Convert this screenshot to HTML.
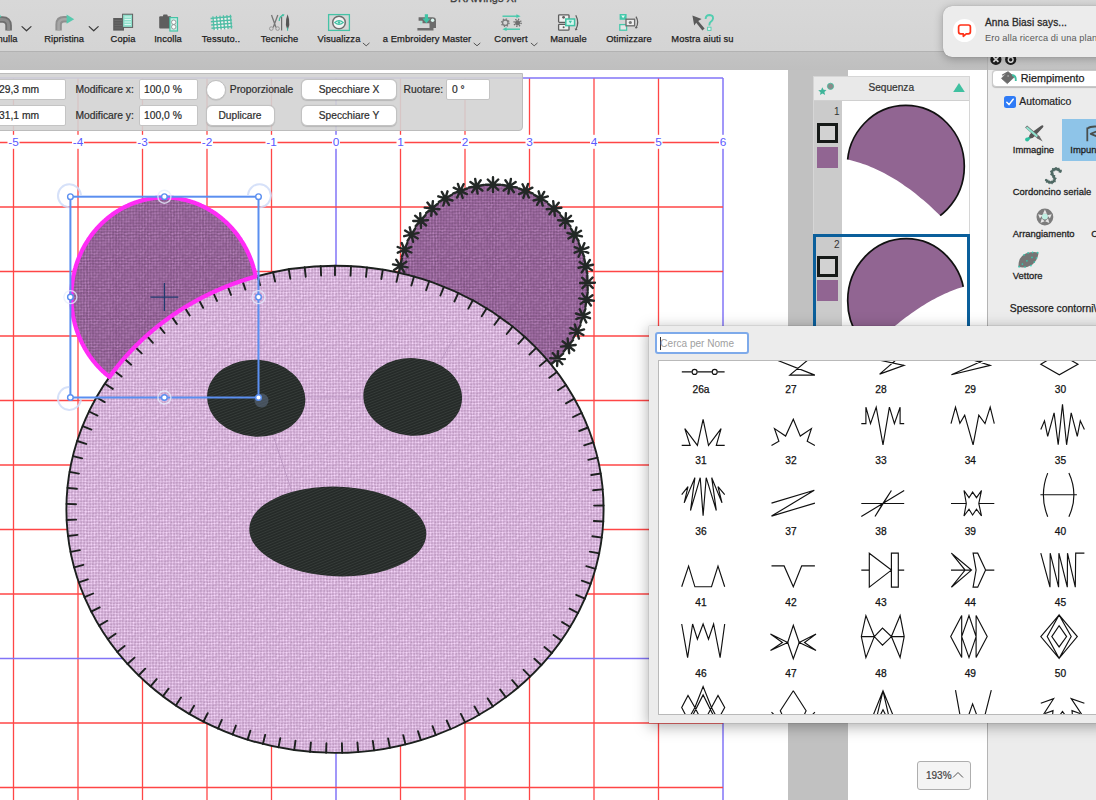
<!DOCTYPE html><html><head><meta charset="utf-8"><title>DRAWings XI</title><style>
*{box-sizing:border-box;margin:0;padding:0}
html,body{width:1096px;height:800px;overflow:hidden;background:#fff;font-family:"Liberation Sans",sans-serif;color:#222}
.abs{position:absolute}
#toolbar{left:0;top:0;width:1096px;height:51px;background:linear-gradient(#d8d8d8,#d4d4d4)}
#band{left:0;top:51px;width:1096px;height:19px;background:linear-gradient(#c3c3c3,#bfbfbf);border-top:1px solid #b2b2b2}
#art{position:absolute;left:0;top:0}
.tl{position:absolute;top:33.8px;font-size:9.35px;color:#1e1e1e;white-space:nowrap;transform:translateX(-50%);letter-spacing:.1px;-webkit-text-stroke:.25px #1e1e1e}
.chev{position:absolute}
#props{left:-4px;top:73px;width:527px;height:58px;background:rgba(211,211,211,.9);border:1px solid #bcbcbc;border-radius:0 0 4px 0}
.fld{position:absolute;background:#fff;border:1px solid #c4c4c4;border-radius:2px;height:21px;font-size:10.3px;line-height:20px;color:#2a2a2a;-webkit-text-stroke:.2px #2a2a2a;white-space:nowrap}
.lbl{position:absolute;font-size:10.3px;color:#2d2d2d;white-space:nowrap;-webkit-text-stroke:.2px #2d2d2d}
.btn{position:absolute;background:#fff;border:1px solid #c2c2c2;border-radius:6px;height:21px;font-size:10.2px;line-height:19px;text-align:center;color:#2d2d2d;-webkit-text-stroke:.2px #2d2d2d;box-shadow:0 .5px 1px rgba(0,0,0,.15)}
#sband{left:788px;top:70px;width:59.5px;height:730px;background:#c1c1c1}
#seq{left:812.5px;top:76px;width:157.5px;height:260px;background:#fff;border:1px solid #d6d6d6}
#rpanel{left:987.3px;top:51px;width:110px;height:749px;background:#ececec;border-left:1px solid #b4b4b4}
#popup{left:648.5px;top:326px;width:460px;height:396.5px;background:#ececec;box-shadow:0 3px 14px rgba(0,0,0,.35),0 0 1px rgba(0,0,0,.4)}
#notif{left:943px;top:5.5px;width:170px;height:51px;background:#ececec;border-radius:9px;box-shadow:0 2px 10px rgba(0,0,0,.28),0 0 1px rgba(0,0,0,.3)}
</style></head><body>
<svg id="art" width="1096" height="800" viewBox="0 0 1096 800">
<defs><pattern id="fh" width="24.00" height="24.00" patternUnits="userSpaceOnUse"><rect width="24.00" height="24.00" fill="rgb(206,169,210)"/><ellipse cx="1.29" cy="1.52" rx="1.02" ry="1.04" fill="rgb(232,201,236)"/><circle cx="-0.21" cy="0.02" r="0.57" fill="rgb(172,137,174)"/><ellipse cx="1.27" cy="4.47" rx="1.00" ry="1.01" fill="rgb(233,202,237)"/><circle cx="-0.23" cy="2.97" r="0.57" fill="rgb(172,137,174)"/><ellipse cx="1.66" cy="7.31" rx="1.01" ry="0.99" fill="rgb(227,196,231)"/><circle cx="0.16" cy="5.81" r="0.57" fill="rgb(172,137,174)"/><ellipse cx="1.54" cy="10.45" rx="1.12" ry="1.10" fill="rgb(230,199,234)"/><circle cx="0.04" cy="8.95" r="0.57" fill="rgb(172,137,174)"/><ellipse cx="1.39" cy="13.32" rx="1.00" ry="1.08" fill="rgb(245,214,249)"/><circle cx="-0.11" cy="11.82" r="0.57" fill="rgb(172,137,174)"/><ellipse cx="1.34" cy="16.54" rx="1.05" ry="1.07" fill="rgb(228,197,232)"/><circle cx="-0.16" cy="15.04" r="0.57" fill="rgb(172,137,174)"/><ellipse cx="1.28" cy="19.28" rx="1.07" ry="1.02" fill="rgb(238,207,242)"/><circle cx="-0.22" cy="17.78" r="0.57" fill="rgb(172,137,174)"/><ellipse cx="1.41" cy="22.54" rx="1.13" ry="0.99" fill="rgb(230,199,234)"/><circle cx="-0.09" cy="21.04" r="0.57" fill="rgb(172,137,174)"/><ellipse cx="4.60" cy="1.37" rx="1.05" ry="1.07" fill="rgb(235,204,239)"/><circle cx="3.10" cy="-0.13" r="0.57" fill="rgb(172,137,174)"/><ellipse cx="4.61" cy="4.39" rx="1.10" ry="1.08" fill="rgb(237,206,241)"/><circle cx="3.11" cy="2.89" r="0.57" fill="rgb(172,137,174)"/><ellipse cx="4.63" cy="7.33" rx="1.01" ry="0.99" fill="rgb(245,214,249)"/><circle cx="3.13" cy="5.83" r="0.57" fill="rgb(172,137,174)"/><ellipse cx="4.63" cy="10.54" rx="1.00" ry="1.04" fill="rgb(235,204,239)"/><circle cx="3.13" cy="9.04" r="0.57" fill="rgb(172,137,174)"/><ellipse cx="4.55" cy="13.54" rx="1.06" ry="1.05" fill="rgb(243,212,247)"/><circle cx="3.05" cy="12.04" r="0.57" fill="rgb(172,137,174)"/><ellipse cx="4.49" cy="16.58" rx="1.17" ry="1.10" fill="rgb(235,204,239)"/><circle cx="2.99" cy="15.08" r="0.57" fill="rgb(172,137,174)"/><ellipse cx="4.75" cy="19.66" rx="1.14" ry="1.04" fill="rgb(227,196,231)"/><circle cx="3.25" cy="18.16" r="0.57" fill="rgb(172,137,174)"/><ellipse cx="4.26" cy="22.48" rx="1.07" ry="1.04" fill="rgb(231,200,235)"/><circle cx="2.76" cy="20.98" r="0.57" fill="rgb(172,137,174)"/><ellipse cx="7.63" cy="1.31" rx="1.01" ry="0.91" fill="rgb(229,198,233)"/><circle cx="6.13" cy="-0.19" r="0.57" fill="rgb(172,137,174)"/><ellipse cx="7.29" cy="4.47" rx="1.07" ry="1.08" fill="rgb(230,199,234)"/><circle cx="5.79" cy="2.97" r="0.57" fill="rgb(172,137,174)"/><ellipse cx="7.68" cy="7.39" rx="1.18" ry="1.07" fill="rgb(236,205,240)"/><circle cx="6.18" cy="5.89" r="0.57" fill="rgb(172,137,174)"/><ellipse cx="7.73" cy="10.33" rx="1.07" ry="1.09" fill="rgb(234,203,238)"/><circle cx="6.23" cy="8.83" r="0.57" fill="rgb(172,137,174)"/><ellipse cx="7.49" cy="13.54" rx="1.04" ry="0.95" fill="rgb(229,198,233)"/><circle cx="5.99" cy="12.04" r="0.57" fill="rgb(172,137,174)"/><ellipse cx="7.43" cy="16.53" rx="0.99" ry="0.99" fill="rgb(231,200,235)"/><circle cx="5.93" cy="15.03" r="0.57" fill="rgb(172,137,174)"/><ellipse cx="7.56" cy="19.59" rx="1.14" ry="1.01" fill="rgb(245,214,249)"/><circle cx="6.06" cy="18.09" r="0.57" fill="rgb(172,137,174)"/><ellipse cx="7.69" cy="22.65" rx="1.18" ry="1.06" fill="rgb(227,196,231)"/><circle cx="6.19" cy="21.15" r="0.57" fill="rgb(172,137,174)"/><ellipse cx="10.57" cy="1.28" rx="1.07" ry="0.92" fill="rgb(233,202,237)"/><circle cx="9.07" cy="-0.22" r="0.57" fill="rgb(172,137,174)"/><ellipse cx="10.42" cy="4.28" rx="1.03" ry="0.93" fill="rgb(227,196,231)"/><circle cx="8.92" cy="2.78" r="0.57" fill="rgb(172,137,174)"/><ellipse cx="10.43" cy="7.26" rx="1.02" ry="0.92" fill="rgb(226,195,230)"/><circle cx="8.93" cy="5.76" r="0.57" fill="rgb(172,137,174)"/><ellipse cx="10.38" cy="10.42" rx="1.12" ry="0.93" fill="rgb(243,212,247)"/><circle cx="8.88" cy="8.92" r="0.57" fill="rgb(172,137,174)"/><ellipse cx="10.75" cy="13.48" rx="1.02" ry="1.08" fill="rgb(233,202,237)"/><circle cx="9.25" cy="11.98" r="0.57" fill="rgb(172,137,174)"/><ellipse cx="10.42" cy="16.38" rx="1.01" ry="0.92" fill="rgb(235,204,239)"/><circle cx="8.92" cy="14.88" r="0.57" fill="rgb(172,137,174)"/><ellipse cx="10.73" cy="19.51" rx="1.02" ry="0.90" fill="rgb(242,211,246)"/><circle cx="9.23" cy="18.01" r="0.57" fill="rgb(172,137,174)"/><ellipse cx="10.51" cy="22.74" rx="1.10" ry="0.91" fill="rgb(228,197,232)"/><circle cx="9.01" cy="21.24" r="0.57" fill="rgb(172,137,174)"/><ellipse cx="13.43" cy="1.33" rx="1.14" ry="0.95" fill="rgb(243,212,247)"/><circle cx="11.93" cy="-0.17" r="0.57" fill="rgb(172,137,174)"/><ellipse cx="13.41" cy="4.36" rx="1.10" ry="1.06" fill="rgb(241,210,245)"/><circle cx="11.91" cy="2.86" r="0.57" fill="rgb(172,137,174)"/><ellipse cx="13.65" cy="7.66" rx="1.20" ry="1.08" fill="rgb(242,211,246)"/><circle cx="12.15" cy="6.16" r="0.57" fill="rgb(172,137,174)"/><ellipse cx="13.43" cy="10.26" rx="1.04" ry="1.01" fill="rgb(240,209,244)"/><circle cx="11.93" cy="8.76" r="0.57" fill="rgb(172,137,174)"/><ellipse cx="13.60" cy="13.73" rx="1.05" ry="0.95" fill="rgb(226,195,230)"/><circle cx="12.10" cy="12.23" r="0.57" fill="rgb(172,137,174)"/><ellipse cx="13.73" cy="16.43" rx="1.19" ry="1.11" fill="rgb(234,203,238)"/><circle cx="12.23" cy="14.93" r="0.57" fill="rgb(172,137,174)"/><ellipse cx="13.35" cy="19.56" rx="1.04" ry="0.94" fill="rgb(230,199,234)"/><circle cx="11.85" cy="18.06" r="0.57" fill="rgb(172,137,174)"/><ellipse cx="13.58" cy="22.65" rx="1.17" ry="1.00" fill="rgb(244,213,248)"/><circle cx="12.08" cy="21.15" r="0.57" fill="rgb(172,137,174)"/><ellipse cx="16.64" cy="1.63" rx="1.13" ry="1.09" fill="rgb(227,196,231)"/><circle cx="15.14" cy="0.13" r="0.57" fill="rgb(172,137,174)"/><ellipse cx="16.42" cy="4.65" rx="1.03" ry="1.07" fill="rgb(235,204,239)"/><circle cx="14.92" cy="3.15" r="0.57" fill="rgb(172,137,174)"/><ellipse cx="16.72" cy="7.61" rx="1.07" ry="0.98" fill="rgb(245,214,249)"/><circle cx="15.22" cy="6.11" r="0.57" fill="rgb(172,137,174)"/><ellipse cx="16.70" cy="10.65" rx="1.02" ry="0.93" fill="rgb(229,198,233)"/><circle cx="15.20" cy="9.15" r="0.57" fill="rgb(172,137,174)"/><ellipse cx="16.58" cy="13.43" rx="1.16" ry="1.11" fill="rgb(228,197,232)"/><circle cx="15.08" cy="11.93" r="0.57" fill="rgb(172,137,174)"/><ellipse cx="16.74" cy="16.57" rx="1.02" ry="0.90" fill="rgb(236,205,240)"/><circle cx="15.24" cy="15.07" r="0.57" fill="rgb(172,137,174)"/><ellipse cx="16.69" cy="19.66" rx="1.19" ry="0.99" fill="rgb(236,205,240)"/><circle cx="15.19" cy="18.16" r="0.57" fill="rgb(172,137,174)"/><ellipse cx="16.37" cy="22.54" rx="1.04" ry="0.96" fill="rgb(230,199,234)"/><circle cx="14.87" cy="21.04" r="0.57" fill="rgb(172,137,174)"/><ellipse cx="19.71" cy="1.43" rx="1.08" ry="0.93" fill="rgb(231,200,235)"/><circle cx="18.21" cy="-0.07" r="0.57" fill="rgb(172,137,174)"/><ellipse cx="19.46" cy="4.71" rx="1.11" ry="1.09" fill="rgb(235,204,239)"/><circle cx="17.96" cy="3.21" r="0.57" fill="rgb(172,137,174)"/><ellipse cx="19.26" cy="7.47" rx="1.10" ry="1.01" fill="rgb(236,205,240)"/><circle cx="17.76" cy="5.97" r="0.57" fill="rgb(172,137,174)"/><ellipse cx="19.34" cy="10.49" rx="0.99" ry="1.07" fill="rgb(229,198,233)"/><circle cx="17.84" cy="8.99" r="0.57" fill="rgb(172,137,174)"/><ellipse cx="19.51" cy="13.53" rx="1.11" ry="0.97" fill="rgb(240,209,244)"/><circle cx="18.01" cy="12.03" r="0.57" fill="rgb(172,137,174)"/><ellipse cx="19.37" cy="16.39" rx="1.01" ry="1.02" fill="rgb(241,210,245)"/><circle cx="17.87" cy="14.89" r="0.57" fill="rgb(172,137,174)"/><ellipse cx="19.63" cy="19.71" rx="1.10" ry="1.02" fill="rgb(241,210,245)"/><circle cx="18.13" cy="18.21" r="0.57" fill="rgb(172,137,174)"/><ellipse cx="19.51" cy="22.60" rx="1.12" ry="1.01" fill="rgb(234,203,238)"/><circle cx="18.01" cy="21.10" r="0.57" fill="rgb(172,137,174)"/><ellipse cx="22.72" cy="1.60" rx="1.10" ry="1.00" fill="rgb(235,204,239)"/><circle cx="21.22" cy="0.10" r="0.57" fill="rgb(172,137,174)"/><ellipse cx="22.53" cy="4.72" rx="1.19" ry="0.95" fill="rgb(243,212,247)"/><circle cx="21.03" cy="3.22" r="0.57" fill="rgb(172,137,174)"/><ellipse cx="22.47" cy="7.29" rx="1.02" ry="0.93" fill="rgb(242,211,246)"/><circle cx="20.97" cy="5.79" r="0.57" fill="rgb(172,137,174)"/><ellipse cx="22.64" cy="10.70" rx="1.01" ry="1.04" fill="rgb(230,199,234)"/><circle cx="21.14" cy="9.20" r="0.57" fill="rgb(172,137,174)"/><ellipse cx="22.32" cy="13.69" rx="1.14" ry="1.04" fill="rgb(229,198,233)"/><circle cx="20.82" cy="12.19" r="0.57" fill="rgb(172,137,174)"/><ellipse cx="22.45" cy="16.49" rx="1.04" ry="1.10" fill="rgb(245,214,249)"/><circle cx="20.95" cy="14.99" r="0.57" fill="rgb(172,137,174)"/><ellipse cx="22.47" cy="19.51" rx="1.16" ry="0.93" fill="rgb(245,214,249)"/><circle cx="20.97" cy="18.01" r="0.57" fill="rgb(172,137,174)"/><ellipse cx="22.61" cy="22.26" rx="1.03" ry="0.97" fill="rgb(232,201,236)"/><circle cx="21.11" cy="20.76" r="0.57" fill="rgb(172,137,174)"/><circle cx="24.00" cy="0.00" r="0.57" fill="rgb(172,137,174)"/><circle cx="0.00" cy="24.00" r="0.57" fill="rgb(172,137,174)"/><circle cx="24.00" cy="3.00" r="0.57" fill="rgb(172,137,174)"/><circle cx="3.00" cy="24.00" r="0.57" fill="rgb(172,137,174)"/><circle cx="24.00" cy="6.00" r="0.57" fill="rgb(172,137,174)"/><circle cx="6.00" cy="24.00" r="0.57" fill="rgb(172,137,174)"/><circle cx="24.00" cy="9.00" r="0.57" fill="rgb(172,137,174)"/><circle cx="9.00" cy="24.00" r="0.57" fill="rgb(172,137,174)"/><circle cx="24.00" cy="12.00" r="0.57" fill="rgb(172,137,174)"/><circle cx="12.00" cy="24.00" r="0.57" fill="rgb(172,137,174)"/><circle cx="24.00" cy="15.00" r="0.57" fill="rgb(172,137,174)"/><circle cx="15.00" cy="24.00" r="0.57" fill="rgb(172,137,174)"/><circle cx="24.00" cy="18.00" r="0.57" fill="rgb(172,137,174)"/><circle cx="18.00" cy="24.00" r="0.57" fill="rgb(172,137,174)"/><circle cx="24.00" cy="21.00" r="0.57" fill="rgb(172,137,174)"/><circle cx="21.00" cy="24.00" r="0.57" fill="rgb(172,137,174)"/><circle cx="24.00" cy="24.00" r="0.57" fill="rgb(172,137,174)"/><circle cx="24.00" cy="24.00" r="0.57" fill="rgb(172,137,174)"/></pattern><pattern id="fe" width="23.20" height="23.20" patternUnits="userSpaceOnUse"><rect width="23.20" height="23.20" fill="rgb(139,93,142)"/><ellipse cx="1.37" cy="1.51" rx="1.05" ry="0.87" fill="rgb(179,126,183)"/><circle cx="-0.08" cy="0.06" r="0.55" fill="rgb(104,64,108)"/><ellipse cx="1.59" cy="4.59" rx="0.97" ry="1.07" fill="rgb(178,125,182)"/><circle cx="0.14" cy="3.14" r="0.55" fill="rgb(104,64,108)"/><ellipse cx="1.59" cy="7.14" rx="1.01" ry="0.88" fill="rgb(168,115,172)"/><circle cx="0.14" cy="5.69" r="0.55" fill="rgb(104,64,108)"/><ellipse cx="1.61" cy="10.03" rx="1.04" ry="1.06" fill="rgb(169,116,173)"/><circle cx="0.16" cy="8.58" r="0.55" fill="rgb(104,64,108)"/><ellipse cx="1.55" cy="12.84" rx="1.14" ry="0.99" fill="rgb(169,116,173)"/><circle cx="0.10" cy="11.39" r="0.55" fill="rgb(104,64,108)"/><ellipse cx="1.24" cy="16.17" rx="1.10" ry="0.96" fill="rgb(167,114,171)"/><circle cx="-0.21" cy="14.72" r="0.55" fill="rgb(104,64,108)"/><ellipse cx="1.63" cy="18.63" rx="1.12" ry="0.89" fill="rgb(181,128,185)"/><circle cx="0.18" cy="17.18" r="0.55" fill="rgb(104,64,108)"/><ellipse cx="1.48" cy="21.96" rx="1.05" ry="0.94" fill="rgb(186,133,190)"/><circle cx="0.03" cy="20.51" r="0.55" fill="rgb(104,64,108)"/><ellipse cx="4.22" cy="1.25" rx="0.98" ry="0.98" fill="rgb(172,119,176)"/><circle cx="2.77" cy="-0.20" r="0.55" fill="rgb(104,64,108)"/><ellipse cx="4.26" cy="4.25" rx="0.97" ry="0.91" fill="rgb(169,116,173)"/><circle cx="2.81" cy="2.80" r="0.55" fill="rgb(104,64,108)"/><ellipse cx="4.19" cy="7.17" rx="1.02" ry="0.97" fill="rgb(184,131,188)"/><circle cx="2.74" cy="5.72" r="0.55" fill="rgb(104,64,108)"/><ellipse cx="4.47" cy="10.18" rx="1.01" ry="0.87" fill="rgb(166,113,170)"/><circle cx="3.02" cy="8.73" r="0.55" fill="rgb(104,64,108)"/><ellipse cx="4.15" cy="13.21" rx="1.05" ry="1.06" fill="rgb(170,117,174)"/><circle cx="2.70" cy="11.76" r="0.55" fill="rgb(104,64,108)"/><ellipse cx="4.30" cy="15.95" rx="1.06" ry="1.04" fill="rgb(176,123,180)"/><circle cx="2.85" cy="14.50" r="0.55" fill="rgb(104,64,108)"/><ellipse cx="4.52" cy="18.95" rx="1.16" ry="0.94" fill="rgb(182,129,186)"/><circle cx="3.07" cy="17.50" r="0.55" fill="rgb(104,64,108)"/><ellipse cx="4.13" cy="21.56" rx="1.04" ry="0.94" fill="rgb(181,128,185)"/><circle cx="2.68" cy="20.11" r="0.55" fill="rgb(104,64,108)"/><ellipse cx="7.08" cy="1.24" rx="1.11" ry="0.92" fill="rgb(167,114,171)"/><circle cx="5.63" cy="-0.21" r="0.55" fill="rgb(104,64,108)"/><ellipse cx="7.14" cy="4.22" rx="1.13" ry="1.01" fill="rgb(186,133,190)"/><circle cx="5.69" cy="2.77" r="0.55" fill="rgb(104,64,108)"/><ellipse cx="7.22" cy="7.13" rx="1.05" ry="0.90" fill="rgb(173,120,177)"/><circle cx="5.77" cy="5.68" r="0.55" fill="rgb(104,64,108)"/><ellipse cx="7.12" cy="10.38" rx="1.15" ry="0.98" fill="rgb(189,136,193)"/><circle cx="5.67" cy="8.93" r="0.55" fill="rgb(104,64,108)"/><ellipse cx="7.19" cy="13.04" rx="1.03" ry="0.87" fill="rgb(173,120,177)"/><circle cx="5.74" cy="11.59" r="0.55" fill="rgb(104,64,108)"/><ellipse cx="7.00" cy="15.83" rx="1.00" ry="0.97" fill="rgb(178,125,182)"/><circle cx="5.55" cy="14.38" r="0.55" fill="rgb(104,64,108)"/><ellipse cx="7.01" cy="18.75" rx="1.04" ry="0.88" fill="rgb(168,115,172)"/><circle cx="5.56" cy="17.30" r="0.55" fill="rgb(104,64,108)"/><ellipse cx="7.38" cy="21.83" rx="1.08" ry="0.98" fill="rgb(171,118,175)"/><circle cx="5.93" cy="20.38" r="0.55" fill="rgb(104,64,108)"/><ellipse cx="10.06" cy="1.69" rx="1.14" ry="0.95" fill="rgb(183,130,187)"/><circle cx="8.61" cy="0.24" r="0.55" fill="rgb(104,64,108)"/><ellipse cx="9.92" cy="4.52" rx="1.10" ry="1.00" fill="rgb(169,116,173)"/><circle cx="8.47" cy="3.07" r="0.55" fill="rgb(104,64,108)"/><ellipse cx="10.31" cy="7.07" rx="1.08" ry="1.02" fill="rgb(187,134,191)"/><circle cx="8.86" cy="5.62" r="0.55" fill="rgb(104,64,108)"/><ellipse cx="10.30" cy="10.31" rx="1.06" ry="1.04" fill="rgb(178,125,182)"/><circle cx="8.85" cy="8.86" r="0.55" fill="rgb(104,64,108)"/><ellipse cx="10.25" cy="12.91" rx="1.14" ry="1.01" fill="rgb(180,127,184)"/><circle cx="8.80" cy="11.46" r="0.55" fill="rgb(104,64,108)"/><ellipse cx="9.95" cy="16.12" rx="0.98" ry="0.94" fill="rgb(166,113,170)"/><circle cx="8.50" cy="14.67" r="0.55" fill="rgb(104,64,108)"/><ellipse cx="10.24" cy="18.84" rx="1.08" ry="1.00" fill="rgb(179,126,183)"/><circle cx="8.79" cy="17.39" r="0.55" fill="rgb(104,64,108)"/><ellipse cx="10.15" cy="21.77" rx="1.12" ry="1.02" fill="rgb(166,113,170)"/><circle cx="8.70" cy="20.32" r="0.55" fill="rgb(104,64,108)"/><ellipse cx="12.93" cy="1.24" rx="0.97" ry="1.02" fill="rgb(181,128,185)"/><circle cx="11.48" cy="-0.21" r="0.55" fill="rgb(104,64,108)"/><ellipse cx="13.17" cy="4.59" rx="1.11" ry="0.91" fill="rgb(172,119,176)"/><circle cx="11.72" cy="3.14" r="0.55" fill="rgb(104,64,108)"/><ellipse cx="13.14" cy="7.38" rx="1.03" ry="0.97" fill="rgb(177,124,181)"/><circle cx="11.69" cy="5.93" r="0.55" fill="rgb(104,64,108)"/><ellipse cx="12.87" cy="10.03" rx="1.09" ry="0.89" fill="rgb(180,127,184)"/><circle cx="11.42" cy="8.58" r="0.55" fill="rgb(104,64,108)"/><ellipse cx="12.81" cy="12.83" rx="1.02" ry="0.99" fill="rgb(183,130,187)"/><circle cx="11.36" cy="11.38" r="0.55" fill="rgb(104,64,108)"/><ellipse cx="13.14" cy="15.85" rx="1.09" ry="1.01" fill="rgb(172,119,176)"/><circle cx="11.69" cy="14.40" r="0.55" fill="rgb(104,64,108)"/><ellipse cx="12.86" cy="19.05" rx="1.05" ry="0.96" fill="rgb(178,125,182)"/><circle cx="11.41" cy="17.60" r="0.55" fill="rgb(104,64,108)"/><ellipse cx="12.81" cy="21.73" rx="1.16" ry="1.06" fill="rgb(170,117,174)"/><circle cx="11.36" cy="20.28" r="0.55" fill="rgb(104,64,108)"/><ellipse cx="15.83" cy="1.30" rx="1.15" ry="0.96" fill="rgb(185,132,189)"/><circle cx="14.38" cy="-0.15" r="0.55" fill="rgb(104,64,108)"/><ellipse cx="15.77" cy="4.36" rx="1.00" ry="0.99" fill="rgb(188,135,192)"/><circle cx="14.32" cy="2.91" r="0.55" fill="rgb(104,64,108)"/><ellipse cx="15.95" cy="7.44" rx="0.98" ry="1.04" fill="rgb(188,135,192)"/><circle cx="14.50" cy="5.99" r="0.55" fill="rgb(104,64,108)"/><ellipse cx="15.94" cy="9.91" rx="1.00" ry="1.05" fill="rgb(182,129,186)"/><circle cx="14.49" cy="8.46" r="0.55" fill="rgb(104,64,108)"/><ellipse cx="15.85" cy="12.87" rx="1.06" ry="0.96" fill="rgb(166,113,170)"/><circle cx="14.40" cy="11.42" r="0.55" fill="rgb(104,64,108)"/><ellipse cx="15.70" cy="16.08" rx="1.02" ry="1.04" fill="rgb(174,121,178)"/><circle cx="14.25" cy="14.63" r="0.55" fill="rgb(104,64,108)"/><ellipse cx="16.06" cy="19.05" rx="0.98" ry="1.06" fill="rgb(186,133,190)"/><circle cx="14.61" cy="17.60" r="0.55" fill="rgb(104,64,108)"/><ellipse cx="16.20" cy="21.79" rx="1.03" ry="0.95" fill="rgb(172,119,176)"/><circle cx="14.75" cy="20.34" r="0.55" fill="rgb(104,64,108)"/><ellipse cx="18.62" cy="1.25" rx="1.04" ry="0.93" fill="rgb(174,121,178)"/><circle cx="17.17" cy="-0.20" r="0.55" fill="rgb(104,64,108)"/><ellipse cx="18.72" cy="4.23" rx="1.01" ry="1.06" fill="rgb(186,133,190)"/><circle cx="17.27" cy="2.78" r="0.55" fill="rgb(104,64,108)"/><ellipse cx="19.08" cy="7.44" rx="1.00" ry="0.95" fill="rgb(178,125,182)"/><circle cx="17.63" cy="5.99" r="0.55" fill="rgb(104,64,108)"/><ellipse cx="19.07" cy="10.17" rx="1.09" ry="1.06" fill="rgb(185,132,189)"/><circle cx="17.62" cy="8.72" r="0.55" fill="rgb(104,64,108)"/><ellipse cx="18.83" cy="13.18" rx="0.97" ry="1.02" fill="rgb(183,130,187)"/><circle cx="17.38" cy="11.73" r="0.55" fill="rgb(104,64,108)"/><ellipse cx="19.06" cy="15.76" rx="1.02" ry="0.88" fill="rgb(181,128,185)"/><circle cx="17.61" cy="14.31" r="0.55" fill="rgb(104,64,108)"/><ellipse cx="18.97" cy="19.09" rx="1.03" ry="0.93" fill="rgb(177,124,181)"/><circle cx="17.52" cy="17.64" r="0.55" fill="rgb(104,64,108)"/><ellipse cx="18.88" cy="21.70" rx="1.09" ry="0.93" fill="rgb(172,119,176)"/><circle cx="17.43" cy="20.25" r="0.55" fill="rgb(104,64,108)"/><ellipse cx="21.95" cy="1.45" rx="0.99" ry="0.91" fill="rgb(170,117,174)"/><circle cx="20.50" cy="-0.00" r="0.55" fill="rgb(104,64,108)"/><ellipse cx="21.72" cy="4.17" rx="1.14" ry="1.07" fill="rgb(171,118,175)"/><circle cx="20.27" cy="2.72" r="0.55" fill="rgb(104,64,108)"/><ellipse cx="21.55" cy="7.12" rx="0.98" ry="0.94" fill="rgb(170,117,174)"/><circle cx="20.10" cy="5.67" r="0.55" fill="rgb(104,64,108)"/><ellipse cx="21.87" cy="10.11" rx="1.07" ry="1.05" fill="rgb(172,119,176)"/><circle cx="20.42" cy="8.66" r="0.55" fill="rgb(104,64,108)"/><ellipse cx="21.67" cy="12.83" rx="1.06" ry="0.95" fill="rgb(175,122,179)"/><circle cx="20.22" cy="11.38" r="0.55" fill="rgb(104,64,108)"/><ellipse cx="21.75" cy="16.01" rx="1.15" ry="0.90" fill="rgb(172,119,176)"/><circle cx="20.30" cy="14.56" r="0.55" fill="rgb(104,64,108)"/><ellipse cx="21.62" cy="18.80" rx="1.00" ry="0.93" fill="rgb(186,133,190)"/><circle cx="20.17" cy="17.35" r="0.55" fill="rgb(104,64,108)"/><ellipse cx="21.94" cy="21.51" rx="1.15" ry="1.04" fill="rgb(176,123,180)"/><circle cx="20.49" cy="20.06" r="0.55" fill="rgb(104,64,108)"/><circle cx="23.20" cy="0.00" r="0.55" fill="rgb(104,64,108)"/><circle cx="0.00" cy="23.20" r="0.55" fill="rgb(104,64,108)"/><circle cx="23.20" cy="2.90" r="0.55" fill="rgb(104,64,108)"/><circle cx="2.90" cy="23.20" r="0.55" fill="rgb(104,64,108)"/><circle cx="23.20" cy="5.80" r="0.55" fill="rgb(104,64,108)"/><circle cx="5.80" cy="23.20" r="0.55" fill="rgb(104,64,108)"/><circle cx="23.20" cy="8.70" r="0.55" fill="rgb(104,64,108)"/><circle cx="8.70" cy="23.20" r="0.55" fill="rgb(104,64,108)"/><circle cx="23.20" cy="11.60" r="0.55" fill="rgb(104,64,108)"/><circle cx="11.60" cy="23.20" r="0.55" fill="rgb(104,64,108)"/><circle cx="23.20" cy="14.50" r="0.55" fill="rgb(104,64,108)"/><circle cx="14.50" cy="23.20" r="0.55" fill="rgb(104,64,108)"/><circle cx="23.20" cy="17.40" r="0.55" fill="rgb(104,64,108)"/><circle cx="17.40" cy="23.20" r="0.55" fill="rgb(104,64,108)"/><circle cx="23.20" cy="20.30" r="0.55" fill="rgb(104,64,108)"/><circle cx="20.30" cy="23.20" r="0.55" fill="rgb(104,64,108)"/><circle cx="23.20" cy="23.20" r="0.55" fill="rgb(104,64,108)"/><circle cx="23.20" cy="23.20" r="0.55" fill="rgb(104,64,108)"/></pattern>

<clipPath id="outhead"><path clip-rule="evenodd" d="M0 0H1096V800H0Z M66.4 509.3 a268.6 243.6 0 1 0 537.2 0 a268.6 243.6 0 1 0 -537.2 0Z"/></clipPath>
<clipPath id="hoop"><rect x="0" y="70" width="723.5" height="730"/></clipPath>
</defs>
<defs><filter id="soft" x="-2%" y="-2%" width="104%" height="104%"><feGaussianBlur stdDeviation="0.85"/></filter>
<pattern id="sat" width="2.6" height="2.6" patternUnits="userSpaceOnUse" patternTransform="rotate(-24)"><rect width="2.6" height="2.6" fill="#252a28"/><rect width="2.6" height=".9" fill="#363c39"/></pattern>
<clipPath id="cph"><ellipse cx="335.0" cy="509.3" rx="268.6" ry="243.6"/></clipPath>
<clipPath id="cpr"><ellipse cx="493.0" cy="285.2" rx="94.5" ry="100.5"/></clipPath>
<clipPath id="cpl"><ellipse cx="164.5" cy="296.8" rx="93.2" ry="99.3"/></clipPath></defs>
<g><line x1="13.50" y1="78" x2="13.50" y2="800" stroke="#ff4646" stroke-width="1.3"/><line x1="78.00" y1="78" x2="78.00" y2="800" stroke="#ff4646" stroke-width="1.3"/><line x1="142.50" y1="78" x2="142.50" y2="800" stroke="#ff4646" stroke-width="1.3"/><line x1="207.00" y1="78" x2="207.00" y2="800" stroke="#ff4646" stroke-width="1.3"/><line x1="271.50" y1="78" x2="271.50" y2="800" stroke="#ff4646" stroke-width="1.3"/><line x1="336.00" y1="78" x2="336.00" y2="800" stroke="#8274f7" stroke-width="1.5"/><line x1="400.50" y1="78" x2="400.50" y2="800" stroke="#ff4646" stroke-width="1.3"/><line x1="465.00" y1="78" x2="465.00" y2="800" stroke="#ff4646" stroke-width="1.3"/><line x1="529.50" y1="78" x2="529.50" y2="800" stroke="#ff4646" stroke-width="1.3"/><line x1="594.00" y1="78" x2="594.00" y2="800" stroke="#ff4646" stroke-width="1.3"/><line x1="658.50" y1="78" x2="658.50" y2="800" stroke="#ff4646" stroke-width="1.3"/><line x1="723" y1="78" x2="723" y2="800" stroke="#8274f7" stroke-width="1.5"/><line x1="0" y1="78" x2="723" y2="78" stroke="#8274f7" stroke-width="1.5"/><line x1="0" y1="142.50" x2="723" y2="142.50" stroke="#ff4646" stroke-width="1.3"/><line x1="0" y1="207.00" x2="723" y2="207.00" stroke="#ff4646" stroke-width="1.3"/><line x1="0" y1="271.50" x2="723" y2="271.50" stroke="#ff4646" stroke-width="1.3"/><line x1="0" y1="336.00" x2="723" y2="336.00" stroke="#ff4646" stroke-width="1.3"/><line x1="0" y1="400.50" x2="723" y2="400.50" stroke="#ff4646" stroke-width="1.3"/><line x1="0" y1="465.00" x2="723" y2="465.00" stroke="#ff4646" stroke-width="1.3"/><line x1="0" y1="529.50" x2="723" y2="529.50" stroke="#ff4646" stroke-width="1.3"/><line x1="0" y1="594.00" x2="723" y2="594.00" stroke="#ff4646" stroke-width="1.3"/><line x1="0" y1="658.50" x2="723" y2="658.50" stroke="#8274f7" stroke-width="1.5"/><line x1="0" y1="723.00" x2="723" y2="723.00" stroke="#ff4646" stroke-width="1.3"/><line x1="0" y1="787.50" x2="723" y2="787.50" stroke="#ff4646" stroke-width="1.3"/></g>
<rect x="7.5" y="134.8" width="12" height="14" fill="#fff"/>
<text x="13.5" y="146.4" font-size="11.8" fill="#5a5aff" text-anchor="middle" font-family="Liberation Sans, sans-serif">-5</text>
<rect x="72.0" y="134.8" width="12" height="14" fill="#fff"/>
<text x="78.0" y="146.4" font-size="11.8" fill="#5a5aff" text-anchor="middle" font-family="Liberation Sans, sans-serif">-4</text>
<rect x="136.5" y="134.8" width="12" height="14" fill="#fff"/>
<text x="142.5" y="146.4" font-size="11.8" fill="#5a5aff" text-anchor="middle" font-family="Liberation Sans, sans-serif">-3</text>
<rect x="201.0" y="134.8" width="12" height="14" fill="#fff"/>
<text x="207.0" y="146.4" font-size="11.8" fill="#5a5aff" text-anchor="middle" font-family="Liberation Sans, sans-serif">-2</text>
<rect x="265.5" y="134.8" width="12" height="14" fill="#fff"/>
<text x="271.5" y="146.4" font-size="11.8" fill="#5a5aff" text-anchor="middle" font-family="Liberation Sans, sans-serif">-1</text>
<rect x="332.0" y="134.8" width="8" height="14" fill="#fff"/>
<text x="336.0" y="146.4" font-size="11.8" fill="#5a5aff" text-anchor="middle" font-family="Liberation Sans, sans-serif">0</text>
<rect x="396.5" y="134.8" width="8" height="14" fill="#fff"/>
<text x="400.5" y="146.4" font-size="11.8" fill="#5a5aff" text-anchor="middle" font-family="Liberation Sans, sans-serif">1</text>
<rect x="461.0" y="134.8" width="8" height="14" fill="#fff"/>
<text x="465.0" y="146.4" font-size="11.8" fill="#5a5aff" text-anchor="middle" font-family="Liberation Sans, sans-serif">2</text>
<rect x="525.5" y="134.8" width="8" height="14" fill="#fff"/>
<text x="529.5" y="146.4" font-size="11.8" fill="#5a5aff" text-anchor="middle" font-family="Liberation Sans, sans-serif">3</text>
<rect x="590.0" y="134.8" width="8" height="14" fill="#fff"/>
<text x="594.0" y="146.4" font-size="11.8" fill="#5a5aff" text-anchor="middle" font-family="Liberation Sans, sans-serif">4</text>
<rect x="654.5" y="134.8" width="8" height="14" fill="#fff"/>
<text x="658.5" y="146.4" font-size="11.8" fill="#5a5aff" text-anchor="middle" font-family="Liberation Sans, sans-serif">5</text>
<rect x="719.0" y="134.8" width="8" height="14" fill="#fff"/>
<text x="723.0" y="146.4" font-size="11.8" fill="#5a5aff" text-anchor="middle" font-family="Liberation Sans, sans-serif">6</text>
<g clip-path="url(#cpr)"><rect x="394.5" y="180.7" width="197.0" height="209.0" fill="url(#fe)"/></g>
<path d="M493.0 192.1L493.0 177.3M487.8 189.9L498.2 179.5M485.6 184.7L500.4 184.7M487.8 179.5L498.2 189.9M508.4 193.6L510.9 179.0M503.6 190.6L515.7 182.0M502.4 185.0L516.9 187.5M505.4 180.2L513.9 192.3M523.3 197.9L528.1 183.9M519.0 194.1L532.4 187.7M518.7 188.5L532.7 193.3M522.5 184.3L528.9 197.6M537.1 204.9L544.2 191.9M533.6 200.5L547.8 196.4M534.2 194.9L547.2 202.0M538.6 191.3L542.7 205.5M549.4 214.3L558.7 202.7M546.7 209.3L561.4 207.7M548.3 203.9L559.8 213.1M553.2 201.1L554.9 215.8M560.0 225.6L571.0 215.8M558.1 220.3L572.9 221.2M560.6 215.2L570.4 226.3M565.9 213.3L565.1 228.1M568.4 238.6L581.0 230.8M567.5 233.0L581.9 236.4M570.8 228.4L578.6 241.0M576.4 227.5L573.0 241.9M574.6 252.7L588.4 247.3M574.7 247.1L588.3 252.9M578.8 243.1L584.2 256.9M584.4 243.2L578.6 256.8M578.5 267.7L593.0 264.7M579.6 262.1L592.0 270.3M584.3 258.9L587.3 273.4M589.9 260.0L581.7 272.4M580.1 283.0L594.9 282.7M582.1 277.7L592.8 287.9M587.3 275.4L587.7 290.2M592.6 277.5L582.4 288.2M579.2 298.4L593.8 300.7M582.2 293.6L590.9 305.5M587.7 292.2L585.4 306.9M592.5 295.2L580.6 303.9M576.0 313.5L590.0 318.2M579.7 309.2L586.3 322.5M585.4 308.9L580.6 322.9M589.6 312.6L576.4 319.1M570.4 327.9L583.4 335.0M574.8 324.4L578.9 338.6M580.5 325.0L573.3 338.0M584.0 329.4L569.8 333.5M562.6 341.2L574.1 350.5M567.6 338.5L569.2 353.2M573.0 340.1L563.7 351.6M575.7 345.0L561.0 346.6M552.7 353.0L562.4 364.2M558.0 351.2L557.1 366.0M563.1 353.7L552.0 363.5M564.9 359.1L550.2 358.1M540.8 363.0L548.6 375.6M546.4 362.1L543.0 376.5M551.0 365.4L538.4 373.2M551.9 371.0L537.5 367.6M477.6 193.6L475.2 179.0M472.1 192.3L480.7 180.2M469.1 187.5L483.7 185.0M470.4 182.0L482.4 190.6M462.7 197.9L457.9 183.9M457.1 197.6L463.6 184.2M453.3 193.3L467.3 188.5M453.7 187.7L467.0 194.1M449.0 204.9L441.8 191.9M443.3 205.5L447.5 191.3M438.9 201.9L451.9 194.8M438.3 196.3L452.5 200.5M436.6 214.2L427.4 202.6M431.2 215.8L432.9 201.1M426.2 213.0L437.8 203.8M424.7 207.6L439.4 209.3M426.1 225.5L415.1 215.7M421.0 228.0L420.2 213.2M415.7 226.1L425.5 215.1M413.2 221.0L428.0 220.2M417.7 238.4L405.1 230.6M413.1 241.8L409.7 227.3M407.5 240.8L415.3 228.3M404.2 236.2L418.6 232.9M411.4 252.5L397.7 247.0M407.5 256.6L401.7 243.0M401.8 256.6L407.3 242.9M397.8 252.7L411.4 246.9M407.5 267.4L393.0 264.4M404.3 272.1L396.2 259.7M398.8 273.1L401.8 258.7M394.1 270.0L406.4 261.8M405.9 282.7L391.1 282.3M403.6 287.9L393.5 277.1M398.3 289.9L398.7 275.1M393.2 287.6L403.9 277.4" stroke="#232826" stroke-width="2.4" stroke-linecap="round" fill="none"/>
<g clip-path="url(#cph)"><rect x="62.4" y="261.7" width="545.2" height="495.2" fill="url(#fh)"/></g>
<ellipse cx="335.0" cy="509.3" rx="268.6" ry="243.6" fill="none" stroke="#1c201e" stroke-width="1.9"/>
<path d="M335.0 265.7L335.0 275.2M351.0 266.1L350.5 275.6M367.0 267.4L366.0 276.9M382.8 269.6L381.3 279.0M398.5 272.6L396.5 281.9M414.0 276.5L411.4 285.6M429.2 281.2L426.1 290.2M444.0 286.7L440.4 295.5M458.4 292.9L454.4 301.5M472.8 300.2L468.3 308.6M486.7 308.3L481.7 316.3M500.0 317.1L494.5 324.8M512.6 326.6L506.7 334.0M524.6 336.8L518.3 343.8M536.2 347.9L529.4 354.6M547.0 359.7L539.8 365.9M556.9 372.1L549.3 377.8M566.0 385.0L558.0 390.2M574.3 398.7L566.0 403.4M581.7 412.9L573.1 417.0M588.0 427.5L579.2 431.0M593.3 442.4L584.2 445.3M597.5 457.7L588.3 459.9M600.7 473.5L591.3 475.0M602.7 489.4L593.2 490.3M603.6 505.5L594.1 505.6M603.3 521.5L593.8 521.0M601.8 537.6L592.4 536.3M599.2 553.4L589.8 551.6M595.5 568.8L586.3 566.2M590.7 583.8L581.8 580.7M584.9 598.6L576.2 594.8M578.0 613.0L569.6 608.6M570.2 627.0L562.1 622.1M561.3 640.5L553.6 635.0M551.8 653.1L544.4 647.1M541.4 665.2L534.4 658.7M530.2 676.6L523.6 669.8M518.3 687.4L512.1 680.1M505.9 697.2L500.2 689.6M492.9 706.4L487.7 698.4M479.3 714.8L474.5 706.5M465.1 722.4L460.9 713.9M450.5 729.2L446.7 720.5M435.8 735.1L432.6 726.2M420.8 740.1L418.0 731.1M405.5 744.4L403.2 735.1M389.9 747.8L388.1 738.4M374.1 750.3L372.8 740.9M358.2 752.0L357.4 742.5M342.2 752.8L341.9 743.3M326.1 752.8L326.4 743.3M310.1 751.9L310.9 742.4M294.2 750.1L295.5 740.7M278.5 747.4L280.3 738.1M262.9 744.0L265.2 734.8M247.6 739.6L250.4 730.6M232.6 734.5L235.9 725.6M218.0 728.6L221.8 719.9M203.4 721.7L207.7 713.2M189.3 713.9L194.1 705.7M175.8 705.5L181.0 697.6M162.8 696.3L168.6 688.7M150.5 686.4L156.7 679.1M138.6 675.5L145.2 668.7M127.5 664.0L134.5 657.6M117.2 651.9L124.6 645.9M107.8 639.2L115.6 633.8M99.0 625.6L107.2 620.8M91.2 611.6L99.7 607.3M84.5 597.2L93.2 593.5M78.8 582.4L87.8 579.3M74.1 567.3L83.3 564.8M70.5 551.9L79.9 550.1M68.0 536.0L77.5 534.9M66.7 520.0L76.1 519.6M66.5 503.9L76.0 504.2M67.4 487.9L76.9 488.8M69.6 471.9L78.9 473.6M72.9 456.2L82.1 458.4M77.2 441.0L86.2 443.9M82.6 426.1L91.4 429.6M89.0 411.5L97.5 415.6M96.4 397.3L104.7 402.1M104.9 383.7L112.8 388.9M114.0 370.8L121.6 376.6M124.1 358.5L131.2 364.7M134.9 346.8L141.7 353.4M146.6 335.7L152.9 342.8M158.6 325.6L164.5 333.0M171.4 316.1L176.8 323.9M184.7 307.4L189.7 315.5M198.6 299.4L203.1 307.8M213.1 292.3L217.0 300.9M227.6 286.0L231.0 294.9M242.4 280.6L245.4 289.6M257.6 276.0L260.1 285.2M273.1 272.3L275.1 281.5M288.8 269.3L290.3 278.7M304.7 267.3L305.7 276.7M320.7 266.0L321.1 275.5" stroke="#1c201e" stroke-width="1.9" stroke-linecap="round" fill="none"/>
<path d="M305 397L363 397M274 438L292 492M440 362L454 338" stroke="#b995c0" stroke-width="1" fill="none" opacity=".8"/>
<ellipse cx="256.2" cy="398.2" rx="49.2" ry="38.5" fill="url(#sat)" transform="rotate(4 256.2 398.2)"/>
<ellipse cx="412.7" cy="396.9" rx="49.4" ry="38.8" fill="url(#sat)" transform="rotate(3 412.7 396.9)"/>
<ellipse cx="337.8" cy="531.5" rx="88.6" ry="44.8" fill="url(#sat)" transform="rotate(2 337.8 531.5)"/>
<g clip-path="url(#outhead)"><g clip-path="url(#cpl)"><rect x="67.3" y="193.5" width="194.4" height="206.6" fill="url(#fe)"/></g></g>
<path d="M109.4 376.9 L109.1 376.6 L108.7 376.4 L108.4 376.1 L108.1 375.8 L107.8 375.6 L107.4 375.3 L107.1 375.0 L106.8 374.8 L106.5 374.5 L106.2 374.2 L105.8 374.0 L105.5 373.7 L105.2 373.4 L104.9 373.1 L104.6 372.9 L104.3 372.6 L104.0 372.3 L103.7 372.0 L103.4 371.7 L103.0 371.5 L102.7 371.2 L102.4 370.9 L102.1 370.6 L101.8 370.3 L101.5 370.0 L101.2 369.7 L100.9 369.4 L100.6 369.1 L100.3 368.8 L100.1 368.5 L99.8 368.2 L99.5 367.9 L99.2 367.6 L98.9 367.3 L98.6 367.0 L98.3 366.7 L98.0 366.4 L97.7 366.1 L97.5 365.8 L97.2 365.5 L96.9 365.2 L96.6 364.8 L96.3 364.5 L96.1 364.2 L95.8 363.9 L95.5 363.6 L95.2 363.2 L95.0 362.9 L94.7 362.6 L94.4 362.3 L94.2 361.9 L93.9 361.6 L93.6 361.3 L93.4 361.0 L93.1 360.6 L92.8 360.3 L92.6 360.0 L92.3 359.6 L92.1 359.3 L91.8 359.0 L91.6 358.6 L91.3 358.3 L91.1 357.9 L90.8 357.6 L90.6 357.3 L90.3 356.9 L90.1 356.6 L89.8 356.2 L89.6 355.9 L89.3 355.5 L89.1 355.2 L88.9 354.8 L88.6 354.5 L88.4 354.1 L88.2 353.8 L87.9 353.4 L87.7 353.0 L87.5 352.7 L87.2 352.3 L87.0 352.0 L86.8 351.6 L86.6 351.2 L86.3 350.9 L86.1 350.5 L85.9 350.2 L85.7 349.8 L85.5 349.4 L85.2 349.1 L85.0 348.7 L84.8 348.3 L84.6 347.9 L84.4 347.6 L84.2 347.2 L84.0 346.8 L83.8 346.4 L83.6 346.1 L83.4 345.7 L83.2 345.3 L83.0 344.9 L82.8 344.6 L82.6 344.2 L82.4 343.8 L82.2 343.4 L82.0 343.0 L81.8 342.7 L81.6 342.3 L81.5 341.9 L81.3 341.5 L81.1 341.1 L80.9 340.7 L80.7 340.3 L80.6 339.9 L80.4 339.5 L80.2 339.2 L80.0 338.8 L79.9 338.4 L79.7 338.0 L79.5 337.6 L79.4 337.2 L79.2 336.8 L79.0 336.4 L78.9 336.0 L78.7 335.6 L78.6 335.2 L78.4 334.8 L78.2 334.4 L78.1 334.0 L77.9 333.6 L77.8 333.2 L77.6 332.8 L77.5 332.4 L77.3 332.0 L77.2 331.6 L77.1 331.2 L76.9 330.8 L76.8 330.4 L76.6 329.9 L76.5 329.5 L76.4 329.1 L76.2 328.7 L76.1 328.3 L76.0 327.9 L75.9 327.5 L75.7 327.1 L75.6 326.7 L75.5 326.2 L75.4 325.8 L75.3 325.4 L75.1 325.0 L75.0 324.6 L74.9 324.2 L74.8 323.8 L74.7 323.3 L74.6 322.9 L74.5 322.5 L74.4 322.1 L74.3 321.7 L74.2 321.2 L74.1 320.8 L74.0 320.4 L73.9 320.0 L73.8 319.6 L73.7 319.1 L73.6 318.7 L73.5 318.3 L73.4 317.9 L73.3 317.4 L73.3 317.0 L73.2 316.6 L73.1 316.2 L73.0 315.7 L72.9 315.3 L72.9 314.9 L72.8 314.5 L72.7 314.0 L72.6 313.6 L72.6 313.2 L72.5 312.8 L72.4 312.3 L72.4 311.9 L72.3 311.5 L72.3 311.0 L72.2 310.6 L72.2 310.2 L72.1 309.8 L72.0 309.3 L72.0 308.9 L71.9 308.5 L71.9 308.0 L71.9 307.6 L71.8 307.2 L71.8 306.7 L71.7 306.3 L71.7 305.9 L71.7 305.5 L71.6 305.0 L71.6 304.6 L71.6 304.2 L71.5 303.7 L71.5 303.3 L71.5 302.9 L71.4 302.4 L71.4 302.0 L71.4 301.6 L71.4 301.1 L71.4 300.7 L71.4 300.3 L71.3 299.8 L71.3 299.4 L71.3 299.0 L71.3 298.5 L71.3 298.1 L71.3 297.7 L71.3 297.2 L71.3 296.8 L71.3 296.4 L71.3 295.9 L71.3 295.5 L71.3 295.1 L71.3 294.6 L71.3 294.2 L71.3 293.8 L71.4 293.3 L71.4 292.9 L71.4 292.5 L71.4 292.0 L71.4 291.6 L71.4 291.2 L71.5 290.7 L71.5 290.3 L71.5 289.9 L71.6 289.4 L71.6 289.0 L71.6 288.6 L71.7 288.1 L71.7 287.7 L71.7 287.3 L71.8 286.9 L71.8 286.4 L71.9 286.0 L71.9 285.6 L71.9 285.1 L72.0 284.7 L72.0 284.3 L72.1 283.8 L72.2 283.4 L72.2 283.0 L72.3 282.6 L72.3 282.1 L72.4 281.7 L72.4 281.3 L72.5 280.8 L72.6 280.4 L72.6 280.0 L72.7 279.6 L72.8 279.1 L72.9 278.7 L72.9 278.3 L73.0 277.9 L73.1 277.4 L73.2 277.0 L73.3 276.6 L73.3 276.2 L73.4 275.7 L73.5 275.3 L73.6 274.9 L73.7 274.5 L73.8 274.0 L73.9 273.6 L74.0 273.2 L74.1 272.8 L74.2 272.4 L74.3 271.9 L74.4 271.5 L74.5 271.1 L74.6 270.7 L74.7 270.3 L74.8 269.8 L74.9 269.4 L75.0 269.0 L75.1 268.6 L75.3 268.2 L75.4 267.8 L75.5 267.4 L75.6 266.9 L75.7 266.5 L75.9 266.1 L76.0 265.7 L76.1 265.3 L76.2 264.9 L76.4 264.5 L76.5 264.1 L76.6 263.7 L76.8 263.2 L76.9 262.8 L77.1 262.4 L77.2 262.0 L77.3 261.6 L77.5 261.2 L77.6 260.8 L77.8 260.4 L77.9 260.0 L78.1 259.6 L78.2 259.2 L78.4 258.8 L78.6 258.4 L78.7 258.0 L78.9 257.6 L79.0 257.2 L79.2 256.8 L79.4 256.4 L79.5 256.0 L79.7 255.6 L79.9 255.2 L80.0 254.8 L80.2 254.4 L80.4 254.1 L80.6 253.7 L80.7 253.3 L80.9 252.9 L81.1 252.5 L81.3 252.1 L81.5 251.7 L81.6 251.3 L81.8 250.9 L82.0 250.6 L82.2 250.2 L82.4 249.8 L82.6 249.4 L82.8 249.0 L83.0 248.7 L83.2 248.3 L83.4 247.9 L83.6 247.5 L83.8 247.2 L84.0 246.8 L84.2 246.4 L84.4 246.0 L84.6 245.7 L84.8 245.3 L85.0 244.9 L85.2 244.5 L85.5 244.2 L85.7 243.8 L85.9 243.4 L86.1 243.1 L86.3 242.7 L86.6 242.4 L86.8 242.0 L87.0 241.6 L87.2 241.3 L87.5 240.9 L87.7 240.6 L87.9 240.2 L88.2 239.8 L88.4 239.5 L88.6 239.1 L88.9 238.8 L89.1 238.4 L89.3 238.1 L89.6 237.7 L89.8 237.4 L90.1 237.0 L90.3 236.7 L90.6 236.3 L90.8 236.0 L91.1 235.7 L91.3 235.3 L91.6 235.0 L91.8 234.6 L92.1 234.3 L92.3 234.0 L92.6 233.6 L92.8 233.3 L93.1 233.0 L93.4 232.6 L93.6 232.3 L93.9 232.0 L94.2 231.7 L94.4 231.3 L94.7 231.0 L95.0 230.7 L95.2 230.4 L95.5 230.0 L95.8 229.7 L96.1 229.4 L96.3 229.1 L96.6 228.8 L96.9 228.4 L97.2 228.1 L97.5 227.8 L97.7 227.5 L98.0 227.2 L98.3 226.9 L98.6 226.6 L98.9 226.3 L99.2 226.0 L99.5 225.7 L99.8 225.4 L100.1 225.1 L100.3 224.8 L100.6 224.5 L100.9 224.2 L101.2 223.9 L101.5 223.6 L101.8 223.3 L102.1 223.0 L102.4 222.7 L102.7 222.4 L103.0 222.1 L103.4 221.9 L103.7 221.6 L104.0 221.3 L104.3 221.0 L104.6 220.7 L104.9 220.5 L105.2 220.2 L105.5 219.9 L105.8 219.6 L106.2 219.4 L106.5 219.1 L106.8 218.8 L107.1 218.6 L107.4 218.3 L107.8 218.0 L108.1 217.8 L108.4 217.5 L108.7 217.2 L109.1 217.0 L109.4 216.7 L109.7 216.5 L110.0 216.2 L110.4 216.0 L110.7 215.7 L111.0 215.5 L111.4 215.2 L111.7 215.0 L112.0 214.7 L112.4 214.5 L112.7 214.2 L113.1 214.0 L113.4 213.8 L113.7 213.5 L114.1 213.3 L114.4 213.1 L114.8 212.8 L115.1 212.6 L115.5 212.4 L115.8 212.1 L116.2 211.9 L116.5 211.7 L116.8 211.5 L117.2 211.2 L117.5 211.0 L117.9 210.8 L118.3 210.6 L118.6 210.4 L119.0 210.2 L119.3 210.0 L119.7 209.7 L120.0 209.5 L120.4 209.3 L120.7 209.1 L121.1 208.9 L121.5 208.7 L121.8 208.5 L122.2 208.3 L122.6 208.1 L122.9 207.9 L123.3 207.7 L123.6 207.5 L124.0 207.4 L124.4 207.2 L124.7 207.0 L125.1 206.8 L125.5 206.6 L125.9 206.4 L126.2 206.3 L126.6 206.1 L127.0 205.9 L127.3 205.7 L127.7 205.6 L128.1 205.4 L128.5 205.2 L128.8 205.1 L129.2 204.9 L129.6 204.7 L130.0 204.6 L130.3 204.4 L130.7 204.3 L131.1 204.1 L131.5 203.9 L131.9 203.8 L132.2 203.6 L132.6 203.5 L133.0 203.3 L133.4 203.2 L133.8 203.1 L134.2 202.9 L134.5 202.8 L134.9 202.6 L135.3 202.5 L135.7 202.4 L136.1 202.2 L136.5 202.1 L136.9 202.0 L137.3 201.8 L137.6 201.7 L138.0 201.6 L138.4 201.5 L138.8 201.3 L139.2 201.2 L139.6 201.1 L140.0 201.0 L140.4 200.9 L140.8 200.8 L141.2 200.7 L141.6 200.6 L142.0 200.4 L142.3 200.3 L142.7 200.2 L143.1 200.1 L143.5 200.0 L143.9 199.9 L144.3 199.9 L144.7 199.8 L145.1 199.7 L145.5 199.6 L145.9 199.5 L146.3 199.4 L146.7 199.3 L147.1 199.2 L147.5 199.2 L147.9 199.1 L148.3 199.0 L148.7 198.9 L149.1 198.9 L149.5 198.8 L149.9 198.7 L150.3 198.7 L150.7 198.6 L151.1 198.5 L151.5 198.5 L151.9 198.4 L152.3 198.3 L152.7 198.3 L153.1 198.2 L153.5 198.2 L153.9 198.1 L154.4 198.1 L154.8 198.0 L155.2 198.0 L155.6 198.0 L156.0 197.9 L156.4 197.9 L156.8 197.8 L157.2 197.8 L157.6 197.8 L158.0 197.7 L158.4 197.7 L158.8 197.7 L159.2 197.7 L159.6 197.6 L160.0 197.6 L160.4 197.6 L160.8 197.6 L161.2 197.6 L161.7 197.5 L162.1 197.5 L162.5 197.5 L162.9 197.5 L163.3 197.5 L163.7 197.5 L164.1 197.5 L164.5 197.5 L164.9 197.5 L165.3 197.5 L165.7 197.5 L166.1 197.5 L166.5 197.5 L166.9 197.5 L167.3 197.5 L167.8 197.6 L168.2 197.6 L168.6 197.6 L169.0 197.6 L169.4 197.6 L169.8 197.7 L170.2 197.7 L170.6 197.7 L171.0 197.7 L171.4 197.8 L171.8 197.8 L172.2 197.8 L172.6 197.9 L173.0 197.9 L173.4 198.0 L173.8 198.0 L174.2 198.0 L174.6 198.1 L175.1 198.1 L175.5 198.2 L175.9 198.2 L176.3 198.3 L176.7 198.3 L177.1 198.4 L177.5 198.5 L177.9 198.5 L178.3 198.6 L178.7 198.7 L179.1 198.7 L179.5 198.8 L179.9 198.9 L180.3 198.9 L180.7 199.0 L181.1 199.1 L181.5 199.2 L181.9 199.2 L182.3 199.3 L182.7 199.4 L183.1 199.5 L183.5 199.6 L183.9 199.7 L184.3 199.8 L184.7 199.9 L185.1 199.9 L185.5 200.0 L185.9 200.1 L186.3 200.2 L186.7 200.3 L187.0 200.4 L187.4 200.6 L187.8 200.7 L188.2 200.8 L188.6 200.9 L189.0 201.0 L189.4 201.1 L189.8 201.2 L190.2 201.3 L190.6 201.5 L191.0 201.6 L191.4 201.7 L191.7 201.8 L192.1 202.0 L192.5 202.1 L192.9 202.2 L193.3 202.4 L193.7 202.5 L194.1 202.6 L194.5 202.8 L194.8 202.9 L195.2 203.1 L195.6 203.2 L196.0 203.3 L196.4 203.5 L196.8 203.6 L197.1 203.8 L197.5 203.9 L197.9 204.1 L198.3 204.3 L198.7 204.4 L199.0 204.6 L199.4 204.7 L199.8 204.9 L200.2 205.1 L200.5 205.2 L200.9 205.4 L201.3 205.6 L201.7 205.7 L202.0 205.9 L202.4 206.1 L202.8 206.3 L203.1 206.4 L203.5 206.6 L203.9 206.8 L204.3 207.0 L204.6 207.2 L205.0 207.4 L205.4 207.5 L205.7 207.7 L206.1 207.9 L206.4 208.1 L206.8 208.3 L207.2 208.5 L207.5 208.7 L207.9 208.9 L208.3 209.1 L208.6 209.3 L209.0 209.5 L209.3 209.7 L209.7 210.0 L210.0 210.2 L210.4 210.4 L210.7 210.6 L211.1 210.8 L211.5 211.0 L211.8 211.2 L212.2 211.5 L212.5 211.7 L212.8 211.9 L213.2 212.1 L213.5 212.4 L213.9 212.6 L214.2 212.8 L214.6 213.1 L214.9 213.3 L215.3 213.5 L215.6 213.8 L215.9 214.0 L216.3 214.2 L216.6 214.5 L217.0 214.7 L217.3 215.0 L217.6 215.2 L218.0 215.5 L218.3 215.7 L218.6 216.0 L219.0 216.2 L219.3 216.5 L219.6 216.7 L219.9 217.0 L220.3 217.2 L220.6 217.5 L220.9 217.8 L221.2 218.0 L221.6 218.3 L221.9 218.6 L222.2 218.8 L222.5 219.1 L222.8 219.4 L223.2 219.6 L223.5 219.9 L223.8 220.2 L224.1 220.5 L224.4 220.7 L224.7 221.0 L225.0 221.3 L225.3 221.6 L225.6 221.9 L226.0 222.1 L226.3 222.4 L226.6 222.7 L226.9 223.0 L227.2 223.3 L227.5 223.6 L227.8 223.9 L228.1 224.2 L228.4 224.5 L228.7 224.8 L228.9 225.1 L229.2 225.4 L229.5 225.7 L229.8 226.0 L230.1 226.3 L230.4 226.6 L230.7 226.9 L231.0 227.2 L231.3 227.5 L231.5 227.8 L231.8 228.1 L232.1 228.4 L232.4 228.8 L232.7 229.1 L232.9 229.4 L233.2 229.7 L233.5 230.0 L233.8 230.4 L234.0 230.7 L234.3 231.0 L234.6 231.3 L234.8 231.7 L235.1 232.0 L235.4 232.3 L235.6 232.6 L235.9 233.0 L236.2 233.3 L236.4 233.6 L236.7 234.0 L236.9 234.3 L237.2 234.6 L237.4 235.0 L237.7 235.3 L237.9 235.7 L238.2 236.0 L238.4 236.3 L238.7 236.7 L238.9 237.0 L239.2 237.4 L239.4 237.7 L239.7 238.1 L239.9 238.4 L240.1 238.8 L240.4 239.1 L240.6 239.5 L240.8 239.8 L241.1 240.2 L241.3 240.6 L241.5 240.9 L241.8 241.3 L242.0 241.6 L242.2 242.0 L242.4 242.4 L242.7 242.7 L242.9 243.1 L243.1 243.4 L243.3 243.8 L243.5 244.2 L243.8 244.5 L244.0 244.9 L244.2 245.3 L244.4 245.7 L244.6 246.0 L244.8 246.4 L245.0 246.8 L245.2 247.1 L245.4 247.5 L245.6 247.9 L245.8 248.3 L246.0 248.7 L246.2 249.0 L246.4 249.4 L246.6 249.8 L246.8 250.2 L247.0 250.6 L247.2 250.9 L247.4 251.3 L247.5 251.7 L247.7 252.1 L247.9 252.5 L248.1 252.9 L248.3 253.3 L248.4 253.7 L248.6 254.1 L248.8 254.4 L249.0 254.8 L249.1 255.2 L249.3 255.6 L249.5 256.0 L249.6 256.4 L249.8 256.8 L250.0 257.2 L250.1 257.6 L250.3 258.0 L250.4 258.4 L250.6 258.8 L250.8 259.2 L250.9 259.6 L251.1 260.0 L251.2 260.4 L251.4 260.8 L251.5 261.2 L251.7 261.6 L251.8 262.0 L251.9 262.4 L252.1 262.8 L252.2 263.2 L252.4 263.7 L252.5 264.1 L252.6 264.5 L252.8 264.9 L252.9 265.3 L253.0 265.7 L253.1 266.1 L253.3 266.5 L253.4 266.9 L253.5 267.4 L253.6 267.8 L253.7 268.2 L253.9 268.6 L254.0 269.0 L254.1 269.4 L254.2 269.8 L254.3 270.3 L254.4 270.7 L254.5 271.1 L254.6 271.5 L254.7 271.9 L254.8 272.4 L254.9 272.8 L255.0 273.2 L255.1 273.6 L255.2 274.0 L255.3 274.5 L255.4 274.9 L255.5 275.3 L255.6 275.7 L255.7 276.2 L255.3 276.7 L254.8 276.8 L254.2 277.0 L253.7 277.1 L253.1 277.3 L252.6 277.5 L252.0 277.6 L251.4 277.8 L250.9 278.0 L250.3 278.1 L249.8 278.3 L249.2 278.5 L248.7 278.6 L248.1 278.8 L247.6 279.0 L247.0 279.1 L246.4 279.3 L245.9 279.5 L245.3 279.7 L244.8 279.9 L244.2 280.0 L243.7 280.2 L243.1 280.4 L242.6 280.6 L242.0 280.8 L241.5 280.9 L240.9 281.1 L240.4 281.3 L239.8 281.5 L239.3 281.7 L238.7 281.9 L238.2 282.1 L237.6 282.3 L237.1 282.5 L236.6 282.7 L236.0 282.8 L235.5 283.0 L234.9 283.2 L234.4 283.4 L233.8 283.6 L233.3 283.8 L232.8 284.0 L232.2 284.2 L231.7 284.4 L231.1 284.7 L230.6 284.9 L230.0 285.1 L229.5 285.3 L229.0 285.5 L228.4 285.7 L227.9 285.9 L227.4 286.1 L226.8 286.3 L226.3 286.5 L225.8 286.8 L225.2 287.0 L224.7 287.2 L224.1 287.4 L223.6 287.6 L223.1 287.9 L222.5 288.1 L222.0 288.3 L221.5 288.5 L221.0 288.7 L220.4 289.0 L219.9 289.2 L219.4 289.4 L218.8 289.7 L218.3 289.9 L217.8 290.1 L217.3 290.4 L216.7 290.6 L216.2 290.8 L215.7 291.1 L215.2 291.3 L214.6 291.5 L214.1 291.8 L213.6 292.0 L213.1 292.3 L212.5 292.5 L212.0 292.7 L211.5 293.0 L211.0 293.2 L210.5 293.5 L209.9 293.7 L209.4 294.0 L208.9 294.2 L208.4 294.5 L207.9 294.7 L207.4 295.0 L206.8 295.2 L206.3 295.5 L205.8 295.7 L205.3 296.0 L204.8 296.2 L204.3 296.5 L203.8 296.8 L203.2 297.0 L202.7 297.3 L202.2 297.5 L201.7 297.8 L201.2 298.1 L200.7 298.3 L200.2 298.6 L199.7 298.9 L199.2 299.1 L198.7 299.4 L198.2 299.7 L197.7 299.9 L197.2 300.2 L196.7 300.5 L196.2 300.8 L195.7 301.0 L195.2 301.3 L194.7 301.6 L194.2 301.9 L193.7 302.2 L193.2 302.4 L192.7 302.7 L192.2 303.0 L191.7 303.3 L191.2 303.6 L190.7 303.8 L190.2 304.1 L189.7 304.4 L189.2 304.7 L188.7 305.0 L188.2 305.3 L187.7 305.6 L187.2 305.9 L186.7 306.2 L186.3 306.5 L185.8 306.8 L185.3 307.0 L184.8 307.3 L184.3 307.6 L183.8 307.9 L183.3 308.2 L182.9 308.5 L182.4 308.8 L181.9 309.1 L181.4 309.5 L180.9 309.8 L180.5 310.1 L180.0 310.4 L179.5 310.7 L179.0 311.0 L178.5 311.3 L178.1 311.6 L177.6 311.9 L177.1 312.2 L176.6 312.5 L176.2 312.9 L175.7 313.2 L175.2 313.5 L174.8 313.8 L174.3 314.1 L173.8 314.4 L173.4 314.8 L172.9 315.1 L172.4 315.4 L172.0 315.7 L171.5 316.0 L171.0 316.4 L170.6 316.7 L170.1 317.0 L169.6 317.3 L169.2 317.7 L168.7 318.0 L168.3 318.3 L167.8 318.7 L167.3 319.0 L166.9 319.3 L166.4 319.7 L166.0 320.0 L165.5 320.3 L165.1 320.7 L164.6 321.0 L164.1 321.3 L163.7 321.7 L163.2 322.0 L162.8 322.4 L162.3 322.7 L161.9 323.0 L161.5 323.4 L161.0 323.7 L160.6 324.1 L160.1 324.4 L159.7 324.8 L159.2 325.1 L158.8 325.5 L158.3 325.8 L157.9 326.2 L157.5 326.5 L157.0 326.9 L156.6 327.2 L156.1 327.6 L155.7 327.9 L155.3 328.3 L154.8 328.6 L154.4 329.0 L154.0 329.3 L153.5 329.7 L153.1 330.1 L152.7 330.4 L152.2 330.8 L151.8 331.1 L151.4 331.5 L151.0 331.9 L150.5 332.2 L150.1 332.6 L149.7 333.0 L149.3 333.3 L148.8 333.7 L148.4 334.1 L148.0 334.4 L147.6 334.8 L147.2 335.2 L146.7 335.6 L146.3 335.9 L145.9 336.3 L145.5 336.7 L145.1 337.0 L144.7 337.4 L144.2 337.8 L143.8 338.2 L143.4 338.6 L143.0 338.9 L142.6 339.3 L142.2 339.7 L141.8 340.1 L141.4 340.5 L141.0 340.8 L140.6 341.2 L140.2 341.6 L139.8 342.0 L139.4 342.4 L139.0 342.8 L138.6 343.2 L138.2 343.6 L137.8 343.9 L137.4 344.3 L137.0 344.7 L136.6 345.1 L136.2 345.5 L135.8 345.9 L135.4 346.3 L135.0 346.7 L134.6 347.1 L134.2 347.5 L133.8 347.9 L133.4 348.3 L133.1 348.7 L132.7 349.1 L132.3 349.5 L131.9 349.9 L131.5 350.3 L131.1 350.7 L130.8 351.1 L130.4 351.5 L130.0 351.9 L129.6 352.3 L129.2 352.7 L128.9 353.1 L128.5 353.5 L128.1 353.9 L127.7 354.4 L127.4 354.8 L127.0 355.2 L126.6 355.6 L126.3 356.0 L125.9 356.4 L125.5 356.8 L125.2 357.2 L124.8 357.7 L124.4 358.1 L124.1 358.5 L123.7 358.9 L123.3 359.3 L123.0 359.7 L122.6 360.2 L122.3 360.6 L121.9 361.0 L121.5 361.4 L121.2 361.9 L120.8 362.3 L120.5 362.7 L120.1 363.1 L119.8 363.5 L119.4 364.0 L119.1 364.4 L118.7 364.8 L118.4 365.3 L118.0 365.7 L117.7 366.1 L117.4 366.5 L117.0 367.0 L116.7 367.4 L116.3 367.8 L116.0 368.3 L115.7 368.7 L115.3 369.1 L115.0 369.6 L114.6 370.0 L114.3 370.4 L114.0 370.9 L113.6 371.3 L113.3 371.8 L113.0 372.2 L112.6 372.6 L112.3 373.1 L112.0 373.5 L111.7 374.0 L111.3 374.4 L111.0 374.8 L110.7 375.3 L110.4 375.7 L110.1 376.2 L109.7 376.6 Z" fill="none" stroke="#ff2cf5" stroke-width="4.2" stroke-linejoin="round"/>
<rect x="70.4" y="196.7" width="188.1" height="200.8" fill="none" stroke="#5b8ff0" stroke-width="2"/>
<path d="M68.4 207.2A11.5 11.5 0 1 1 80.9 194.7" fill="none" stroke="#cfdcf8" stroke-width="2" stroke-linecap="round" opacity=".85"/>
<path d="M248.0 194.7A11.5 11.5 0 1 1 260.5 207.2" fill="none" stroke="#cfdcf8" stroke-width="2" stroke-linecap="round" opacity=".85"/>
<path d="M80.9 399.5A11.5 11.5 0 1 1 68.4 387.0" fill="none" stroke="#cfdcf8" stroke-width="2" stroke-linecap="round" opacity=".85"/>
<circle cx="164.4" cy="196.7" r="6.5" fill="none" stroke="#e6edfc" stroke-width="1.4" opacity=".8"/>
<circle cx="164.4" cy="397.5" r="6.5" fill="none" stroke="#e6edfc" stroke-width="1.4" opacity=".8"/>
<circle cx="70.4" cy="297.1" r="6.5" fill="none" stroke="#e6edfc" stroke-width="1.4" opacity=".8"/>
<circle cx="258.5" cy="297.1" r="6.5" fill="none" stroke="#e6edfc" stroke-width="1.4" opacity=".8"/>
<circle cx="261.5" cy="400.5" r="7" fill="#5f6f86" opacity=".55"/>
<circle cx="70.4" cy="196.7" r="2.8" fill="#fff" stroke="#5b8ff0" stroke-width="1.4"/>
<circle cx="164.4" cy="196.7" r="2.8" fill="#fff" stroke="#5b8ff0" stroke-width="1.4"/>
<circle cx="258.5" cy="196.7" r="2.8" fill="#fff" stroke="#5b8ff0" stroke-width="1.4"/>
<circle cx="70.4" cy="297.1" r="2.8" fill="#fff" stroke="#5b8ff0" stroke-width="1.4"/>
<circle cx="258.5" cy="297.1" r="2.8" fill="#fff" stroke="#5b8ff0" stroke-width="1.4"/>
<circle cx="70.4" cy="397.5" r="2.8" fill="#fff" stroke="#5b8ff0" stroke-width="1.4"/>
<circle cx="164.4" cy="397.5" r="2.8" fill="#fff" stroke="#5b8ff0" stroke-width="1.4"/>
<circle cx="258.5" cy="397.5" r="2.8" fill="#fff" stroke="#5b8ff0" stroke-width="1.4"/>
<path d="M150.4 297.1H178.4M164.4 283.1V311.1" stroke="#1f3a6e" stroke-width="1.2"/>
</svg>
<div id="toolbar" class="abs">
<div class="abs" style="left:450px;top:-8.2px;font-size:11px;color:#444;-webkit-text-stroke:.3px #3a3a3a">DRAWings XI</div>
<svg class="abs" style="left:0;top:0" width="760" height="51" viewBox="0 0 760 51">
<g fill="none" stroke="#3a3a3a" stroke-width="1.2" stroke-linecap="round" stroke-linejoin="round">
<path d="M22 26.6L26.5 30.8L31 26.6"/><path d="M89.2 26.6L93.7 30.8L98.2 26.6"/>
</g>
<g fill="none" stroke="#555" stroke-width="1" stroke-linecap="round" stroke-linejoin="round">
<path d="M363.2 43.2L366.2 45.8L369.2 43.2"/><path d="M474 43.2L477 45.8L480 43.2"/><path d="M531.2 43.2L534.2 45.8L537.2 43.2"/>
</g>
<!-- undo (cut off) -->
<path d="M-3 19.5H2.5Q8.6 19.5 8.6 25.5V30.6" fill="none" stroke="#6e6e6e" stroke-width="6.6"/>
<path d="M-3 19.5H2.5Q8.6 19.5 8.6 25.5V30.6" fill="none" stroke="#8b8b8b" stroke-width="3" />
<path d="M0 14.5V17.3H1.5Z" fill="#56c9ae"/>
<!-- redo -->
<path d="M58.6 30.6V24.5Q58.6 19.3 64 19.3H67" fill="none" stroke="#8f8f8f" stroke-width="6.4"/>
<path d="M58.6 30.6V24.5Q58.6 19.3 64 19.3H67" fill="none" stroke="#a6a6a6" stroke-width="2.6"/>
<path d="M66.6 14.6L74.2 19.2L66.6 23.8Z" fill="#56c9ae"/>
<!-- copia -->
<rect x="113.2" y="18" width="10.8" height="12.6" fill="#5b5b5b"/>
<path d="M114.5 20.5H123M114.5 23H123M114.5 25.5H123M114.5 28H123" stroke="#6f6f6f" stroke-width=".8"/>
<rect x="122.6" y="14.2" width="10" height="13.2" fill="#8fe0cc" stroke="#5e5e5e" stroke-width="1"/>
<path d="M124.5 17H131M124.5 19.5H131M124.5 22H131M124.5 24.5H131" stroke="#d9f7f0" stroke-width="1.1"/>
<!-- incolla -->
<rect x="159.2" y="16.2" width="12" height="12.4" rx="1" fill="#5e5e5e"/>
<rect x="163" y="14.6" width="4.6" height="3" rx="1" fill="#5e5e5e"/>
<rect x="169.9" y="17.6" width="7.6" height="13.4" fill="#bfeee3" stroke="#45c3a6" stroke-width="1.2"/>
<circle cx="173.7" cy="22.2" r="2.2" fill="#fff" stroke="#7a7a7a" stroke-width=".7"/><circle cx="173.7" cy="26.9" r="2.2" fill="#fff" stroke="#7a7a7a" stroke-width=".7"/>
<!-- tessuto -->
<g transform="rotate(-5 221.5 22.5)" stroke="#4fbfa6" stroke-width="1.5">
<path d="M211 17.5H232M211 20.8H232M211 24.1H232M211 27.4H232"/>
<path d="M213.5 15.5V29.5M217 15.5V29.5M220.5 15.5V29.5M224 15.5V29.5M227.5 15.5V29.5M231 15.5V29.5" stroke-width="1.2"/>
</g>
<g transform="rotate(-5 221.5 22.5)" fill="#eef7f4">
<circle cx="215.2" cy="19.2" r=".9"/><circle cx="218.8" cy="19.2" r=".9"/><circle cx="222.2" cy="19.2" r=".9"/><circle cx="225.8" cy="19.2" r=".9"/><circle cx="229.2" cy="19.2" r=".9"/>
<circle cx="215.2" cy="22.5" r=".9"/><circle cx="218.8" cy="22.5" r=".9"/><circle cx="222.2" cy="22.5" r=".9"/><circle cx="225.8" cy="22.5" r=".9"/><circle cx="229.2" cy="22.5" r=".9"/>
<circle cx="215.2" cy="25.8" r=".9"/><circle cx="218.8" cy="25.8" r=".9"/><circle cx="222.2" cy="25.8" r=".9"/><circle cx="225.8" cy="25.8" r=".9"/><circle cx="229.2" cy="25.8" r=".9"/>
<circle cx="215.2" cy="29" r=".9"/><circle cx="218.8" cy="29" r=".9"/><circle cx="222.2" cy="29" r=".9"/><circle cx="225.8" cy="29" r=".9"/>
</g>
<!-- tecniche -->
<path d="M271.5 15L276 27.5M277.8 15L273.2 27.5" stroke="#777" stroke-width="1.3" fill="none"/>
<circle cx="271.3" cy="28.6" r="1.8" fill="none" stroke="#999" stroke-width="1"/><circle cx="277.6" cy="28.6" r="1.8" fill="none" stroke="#999" stroke-width="1"/>
<path d="M281.6 30.4V16.5" stroke="#6b6b6b" stroke-width="1.2"/><path d="M279.2 21Q279.4 16 283.6 14.8" stroke="#3fbfa2" stroke-width="1.2" fill="none"/><path d="M281.8 14.2L284.6 14.6L283 16.8Z" fill="#3fbfa2"/>
<path d="M287.6 14.2Q289.8 19 289.3 25L287.6 30.6L285.9 25Q285.4 19 287.6 14.2Z" fill="#555"/><path d="M287.6 27.5V30.8" stroke="#3fbfa2" stroke-width="1"/>
<!-- visualizza -->
<rect x="328.6" y="14.6" width="20.8" height="15.8" fill="none" stroke="#45c3a6" stroke-width="1.3"/>
<circle cx="339" cy="22.5" r="6.3" fill="#f4f4f4" stroke="#6e6e6e" stroke-width="1.5"/>
<path d="M334.8 22.5Q339 18.8 343.2 22.5Q339 26.2 334.8 22.5Z" fill="#fff" stroke="#3fbfa2" stroke-width="1.1"/><circle cx="339" cy="22.5" r="1.3" fill="#3fbfa2"/>
<!-- embroidery master -->
<path d="M418.6 17.2H432.5Q436 17.2 436 20.5V28H433.5V30.6H417.4V28H429.5V23.2H422.5V20.8H418.6Z" fill="#6c6c6c"/>
<circle cx="432.6" cy="20.2" r="1.7" fill="#d8f6ef"/>
<path d="M424.8 14.2H428V18.6H430.4L426.4 23.2L422.4 18.6H424.8Z" fill="#3fc3a5"/>
<path d="M420 21.2H422L421 25.8Z" fill="#9fe6d6"/>
<!-- convert -->
<path d="M502.5 16.2H517.5" stroke="#45c9ab" stroke-width="1.4"/><path d="M516.4 14.3L520.6 16.2L516.4 18.1Z" fill="#45c9ab"/>
<path d="M520 29.2H505.5" stroke="#45c9ab" stroke-width="1.4"/><path d="M506.6 27.3L502.4 29.2L506.6 31.1Z" fill="#45c9ab"/>
<circle cx="505.3" cy="22.7" r="2.7" fill="none" stroke="#7d7d7d" stroke-width="1.3"/><circle cx="505.3" cy="22.7" r="3.7" fill="none" stroke="#7d7d7d" stroke-width="1.5" stroke-dasharray="1.3 1.6"/>
<circle cx="517.6" cy="22.7" r="2.5" fill="#707070"/><circle cx="517.6" cy="22.7" r="3.4" fill="none" stroke="#707070" stroke-width="1.7" stroke-dasharray="1.2 1.47"/>
<!-- manuale -->
<rect x="558.6" y="14.8" width="10.4" height="7.6" rx=".8" fill="#f0f0f0" stroke="#5d5d5d" stroke-width="1.3"/>
<rect x="558.6" y="24.4" width="10.4" height="5.8" rx=".8" fill="#f0f0f0" stroke="#5d5d5d" stroke-width="1.3"/>
<circle cx="563.6" cy="17.3" r="1.4" fill="#5d5d5d"/><circle cx="563.6" cy="27.3" r="1" fill="#5d5d5d"/>
<rect x="565.8" y="19" width="8.8" height="6.6" fill="#d6f5ee" stroke="#3fc3a5" stroke-width="1.5"/>
<path d="M568.6 20.8H572L570.3 23.4Z" fill="#3fc3a5"/>
<path d="M575.8 15.2Q579.6 22.4 575.8 29.8" fill="none" stroke="#5d5d5d" stroke-width="1.2"/><path d="M574.6 28.6L575.6 30.6L577.8 29.6Z" fill="#5d5d5d"/>
<!-- otimizzare -->
<rect x="619.6" y="14" width="7" height="5.8" fill="#45c9ab"/><path d="M621.2 15.6H625L623.1 18.2Z" fill="#e9fbf7"/>
<rect x="619.8" y="24.6" width="6.8" height="5.6" fill="#e6e6e6" stroke="#45c9ab" stroke-width="1.3"/>
<rect x="626" y="19.2" width="8.6" height="6.6" fill="#eee" stroke="#6b6b6b" stroke-width="1.3"/><circle cx="630.3" cy="22.5" r="1.6" fill="#777"/>
<path d="M636 16.6Q639.4 22.4 636 27.8" fill="none" stroke="#5d5d5d" stroke-width="1.2"/><path d="M634.8 26.8L635.8 28.8L638 27.6Z" fill="#5d5d5d"/>
<!-- mostra aiuti su -->
<path d="M692.4 15.4L701.6 19L698.2 21L704.6 28.6L702.4 30.4L696.2 22.8L694.2 25.6Z" fill="#5a5a5a"/>
<path d="M705.6 19Q705.8 15 709.6 15Q713.4 15.2 713 18.6Q712.6 20.6 710.8 21.8Q709.3 23 709.3 25.4" fill="none" stroke="#52cdb0" stroke-width="1.9"/>
<rect x="707.6" y="27.2" width="3.4" height="3.2" fill="#d9f5ee" stroke="#52cdb0" stroke-width=".9"/>
</svg>

<div class="tl" style="left:7.5px">nulla</div>
<div class="tl" style="left:64.2px">Ripristina</div>
<div class="tl" style="left:123.0px">Copia</div>
<div class="tl" style="left:168.0px">Incolla</div>
<div class="tl" style="left:221.0px">Tessuto..</div>
<div class="tl" style="left:279.5px">Tecniche</div>
<div class="tl" style="left:339.0px">Visualizza</div>
<div class="tl" style="left:427.0px">a Embroidery Master</div>
<div class="tl" style="left:511.0px">Convert</div>
<div class="tl" style="left:568.5px">Manuale</div>
<div class="tl" style="left:629.0px">Otimizzare</div>
<div class="tl" style="left:702.5px">Mostra aiuti su</div>
</div>
<div id="band" class="abs"></div>
<div id="props" class="abs">
<div class="fld" style="left:-1.0px;top:4.6px;width:70px;padding-left:1px"><span style="margin-left:1px">29,3 mm</span></div>
<div class="fld" style="left:-1.0px;top:30.8px;width:70px;padding-left:1px"><span style="margin-left:1px">31,1 mm</span></div>
<div class="lbl" style="left:78.5px;top:9.8px">Modificare x:</div>
<div class="lbl" style="left:78.5px;top:36.0px">Modificare y:</div>
<div class="fld" style="left:141.5px;top:4.6px;width:59px;padding-left:4.5px">100,0 %</div>
<div class="fld" style="left:141.5px;top:30.8px;width:59px;padding-left:4.5px">100,0 %</div>
<div class="abs" style="left:208.7px;top:5.7px;width:20px;height:20px;border-radius:50%;background:#fff;border:1px solid #c0c0c0;box-shadow:0 .5px 1px rgba(0,0,0,.15)"></div>
<div class="lbl" style="left:232.8px;top:9.8px">Proporzionale</div>
<div class="btn" style="left:208.5px;top:30.8px;width:69px">Duplicare</div>
<div class="btn" style="left:304.0px;top:4.8px;width:96px">Specchiare X</div>
<div class="btn" style="left:304.0px;top:30.8px;width:96px">Specchiare Y</div>
<div class="lbl" style="left:406.5px;top:9.8px">Ruotare:</div>
<div class="fld" style="left:449.0px;top:4.6px;width:44px;padding-left:5px">0 °</div>
</div>
<div id="sband" class="abs"></div>
<div id="seq" class="abs">
<div class="abs" style="left:0;top:0;width:155.5px;height:24px;background:#e9e9e9;border-bottom:1px solid #d0d0d0"></div>
<div class="abs" style="left:0;top:0;width:155.5px;text-align:center;font-size:10.15px;line-height:21.8px;color:#333;-webkit-text-stroke:.2px #333">Sequenza</div>
<svg class="abs" style="left:0;top:0" width="156" height="24" viewBox="0 0 156 24"><path d="M145 6L150.8 15.1H139.2Z" fill="#3fc0a0"/><circle cx="16.5" cy="9.3" r="3.1" fill="#8a8a8a" stroke="#3fc0a0" stroke-width=".8"/><path d="M8.3 10.2l1.3 2.6 2.9.2-2.1 2 .7 2.9-2.6-1.4-2.5 1.6.5-2.9-2.3-1.9 2.9-.4z" fill="#3fb59a"/></svg>
<div class="abs" style="left:0;top:24px;width:28.5px;height:236px;background:#cbcbcb"></div>
<div class="abs" style="left:0;top:29px;width:26px;text-align:right;font-size:10px;color:#333">1</div>
<div class="abs" style="left:3.2px;top:45.5px;width:21px;height:20.5px;border:3px solid #161a18;background:#d2d2d2"></div>
<div class="abs" style="left:3.2px;top:70px;width:21px;height:20.5px;background:#916592"></div>
<svg class="abs" style="left:28.5px;top:24px" width="128" height="236" viewBox="842 100.5 128 236">
<ellipse cx="905.8" cy="165.8" rx="58.5" ry="60.9" fill="#916592" stroke="#111" stroke-width="1.7"/>
<path d="M842.1 157.9 L844.7 158.4 L847.3 158.9 L849.9 159.5 L852.6 160.2 L855.2 160.9 L857.8 161.7 L860.4 162.5 L863.0 163.4 L865.7 164.3 L868.3 165.3 L870.9 166.4 L873.5 167.5 L876.1 168.7 L878.8 169.9 L881.4 171.2 L884.0 172.6 L886.6 174.0 L889.2 175.4 L891.9 176.9 L894.5 178.5 L897.1 180.1 L899.7 181.8 L902.3 183.6 L904.9 185.4 L907.6 187.2 L910.2 189.1 L912.8 191.1 L915.4 193.1 L918.0 195.2 L920.6 197.4 L923.3 199.6 L925.9 201.8 L928.5 204.1 L931.1 206.5 L933.7 208.9 L936.3 211.4 L939.0 214.0 L941.6 216.6 L944.2 219.2 L946.8 221.9 L950.0 236.0 L836.0 236.0 L836.0 150.0Z" fill="#fff"/>
<ellipse cx="906.2" cy="300.3" rx="58.5" ry="62.2" fill="#916592" stroke="#111" stroke-width="1.7"/>
<path d="M968.1 284.9 L965.5 285.6 L962.9 286.4 L960.3 287.2 L957.7 288.1 L955.1 289.0 L952.5 290.0 L949.9 291.1 L947.3 292.2 L944.7 293.3 L942.2 294.5 L939.6 295.8 L937.0 297.1 L934.4 298.4 L931.8 299.8 L929.2 301.3 L926.6 302.8 L924.0 304.4 L921.4 306.0 L918.8 307.7 L916.2 309.4 L913.7 311.2 L911.1 313.0 L908.5 314.9 L905.9 316.8 L903.3 318.8 L900.7 320.8 L898.1 322.9 L895.5 325.1 L892.9 327.3 L890.3 329.5 L887.8 331.8 L885.2 334.2 L882.6 336.6 L880.0 339.0 L877.4 341.5 L874.8 344.1 L872.2 346.7 L869.6 349.4 L867.0 352.1 L864.5 354.9 L860.0 372.0 L972.0 372.0 L972.0 280.0Z" fill="#fff"/>
</svg>
<div class="abs" style="left:-.9px;top:157.3px;width:157.6px;height:110px;border:3.5px solid #0b5f9b"></div>
<div class="abs" style="left:0;top:162px;width:26px;text-align:right;font-size:10px;color:#333">2</div>
<div class="abs" style="left:3.2px;top:179px;width:21px;height:20.5px;border:3px solid #161a18;background:#d2d2d2"></div>
<div class="abs" style="left:3.2px;top:203px;width:21px;height:20.5px;background:#916592"></div>
</div>

<div id="rpanel" class="abs">
<div class="abs" style="left:0;top:0;width:110px;height:19px;background:linear-gradient(#cfcfcf,#c2c2c2)"></div>
<svg class="abs" style="left:0;top:0" width="110" height="20" viewBox="987.5 51 110 20">
<circle cx="995.4" cy="59.4" r="5.6" fill="#1e1e1e"/><path d="M992.9 56.9L997.9 61.9M997.9 56.9L992.9 61.9" stroke="#e8e8e8" stroke-width="1.7"/>
<circle cx="1010.2" cy="59.4" r="5.6" fill="#1e1e1e"/><circle cx="1010.2" cy="59.8" r="2.4" fill="none" stroke="#e8e8e8" stroke-width="1.4"/><path d="M1007.3 57.2H1012.6" stroke="#e8e8e8" stroke-width="1.2"/>
</svg>
<div class="abs" style="left:4px;top:19px;width:120px;height:16.5px;background:#fff;border:1px solid #c9c9c9;border-radius:4px;box-shadow:0 .5px 1px rgba(0,0,0,.2)"></div>
<svg class="abs" style="left:0;top:19px" width="110" height="18" viewBox="987.5 70 110 18">
<path d="M1007.3 71.6L1014 76.8L1006.8 83.6L1001 78.4Z" fill="#6a6a6a" stroke="#6a6a6a" stroke-width=".8" stroke-linejoin="round"/><path d="M1001.6 75.2L1006.4 72.4" fill="none" stroke="#6a6a6a" stroke-width="1.2"/><circle cx="1007.6" cy="76" r="1" fill="#9a9a9a"/><path d="M1011.6 75Q1015.8 75.6 1015.3 81" fill="none" stroke="#3fbfa2" stroke-width="1.9"/>
</svg>
<div class="abs" style="left:32.5px;top:20.5px;font-size:10.8px;color:#222;-webkit-text-stroke:.25px #222;white-space:nowrap">Riempimento</div>
<div class="abs" style="left:16px;top:45px;width:11.5px;height:11.5px;border-radius:2.5px;background:#2f7bf6"></div>
<svg class="abs" style="left:16px;top:45px" width="12" height="12" viewBox="0 0 12 12"><path d="M2.8 6.2L5 8.6L9.2 3.2" fill="none" stroke="#fff" stroke-width="1.5" stroke-linecap="round" stroke-linejoin="round"/></svg>
<div class="abs" style="left:31px;top:44.5px;font-size:10.4px;color:#222;-webkit-text-stroke:.2px #222;white-space:nowrap">Automatico</div>
<div class="abs" style="left:74.2px;top:68.2px;width:40px;height:41.6px;background:#8ec4e8"></div>
<svg class="abs" style="left:0;top:68px" width="110" height="160" viewBox="987.5 119 110 160">
<!-- immagine: crossed brush + pencil -->
<path d="M1042.6 125.6Q1043.4 126.4 1042.4 127.6L1034.2 136.2Q1032.2 138.4 1029.6 138.6L1028.4 137.4Q1028.4 135 1030.6 133L1040.6 125.8Q1041.8 124.9 1042.6 125.6Z" fill="#565656"/>
<circle cx="1026.6" cy="139.6" r="2" fill="#2fbf9f"/><path d="M1027.2 137.6L1029.2 139.4" stroke="#2fbf9f" stroke-width="2.4"/>
<path d="M1024.6 127.6L1026.6 125.6L1039 136.2L1042.2 141.4L1036.8 138.4Z" fill="#6a6a6a"/>
<path d="M1026 127.2L1036.8 136.6" stroke="#8fe3cf" stroke-width="2"/>
<!-- impunture R -->
<path d="M1086.8 127.4V141.2M1086.8 128.6Q1090 126 1097 126.6M1097 131L1090.2 133.8L1097 136.6" fill="none" stroke="#4a4e4c" stroke-width="1.8" stroke-linejoin="round"/>
<!-- S cord -->
<path d="M1060 171.6Q1057 167.4 1053.2 169.6Q1049.6 172.2 1052.8 176Q1055.8 179.4 1052.6 181.8Q1049.2 183.6 1045.6 180.2" fill="none" stroke="#4f6964" stroke-width="2.5" stroke-linecap="round"/><path d="M1060 171.6Q1057 167.4 1053.2 169.6Q1049.6 172.2 1052.8 176Q1055.8 179.4 1052.6 181.8Q1049.2 183.6 1045.6 180.2" fill="none" stroke="#4f6964" stroke-width="3.7" stroke-dasharray=".9 1.6"/>
<!-- arrangiamento -->
<circle cx="1044.4" cy="217" r="8.4" fill="#7c7c7c"/><circle cx="1044.4" cy="216.6" r="3" fill="#bfeee2"/>
<path d="M1044.4 209.5l2 4.2h-4zM1037.6 214.2l4.4 1-2.6 3.3zM1051.2 214.2l-4.4 1 2.6 3.3zM1040 223l1.2-4.4 3 2.6zM1048.8 223l-1.2-4.4-3 2.6z" fill="#e6e6e6"/>
<!-- vettore leaf -->
<path d="M1018 267Q1017.3 256.5 1026.5 253Q1032.5 251.2 1038 252.4Q1037.6 259.5 1032 264.6Q1026 268.6 1018 267Z" fill="#757575"/>
<g fill="#35c9b0"><circle cx="1023.6" cy="254.8" r=".85"/><circle cx="1027.6" cy="252.9" r=".85"/><circle cx="1032.1" cy="252.3" r=".85"/><circle cx="1037.1" cy="252.7" r=".85"/><circle cx="1036.0" cy="258.0" r=".85"/><circle cx="1033.8" cy="262.1" r=".85"/><circle cx="1030.4" cy="265.6" r=".85"/><circle cx="1018.6" cy="266.7" r=".85"/><circle cx="1021.9" cy="264.1" r=".85"/><circle cx="1026.4" cy="260.8" r=".85"/><circle cx="1031.5" cy="257.4" r=".85"/><circle cx="1024.5" cy="267.0" r=".85"/></g>
</svg>
<div class="abs rl" style="left:24.5px;top:92.5px">Immagine</div>
<div class="abs rl" style="left:82px;top:92.5px">Impunture</div>
<div class="abs rl" style="left:24.5px;top:135px">Cordoncino seriale</div>
<div class="abs rl" style="left:24.5px;top:177px">Arrangiamento</div>
<div class="abs rl" style="left:103px;top:177px">Contorno</div>
<div class="abs rl" style="left:24.5px;top:219px">Vettore</div>
<div class="abs" style="left:21.5px;top:252px;font-size:10.4px;color:#1c1c1c;-webkit-text-stroke:.25px #1c1c1c;white-space:nowrap">Spessore contorni\Vettore</div>
</div>
<style>.rl{font-size:9.42px;color:#1e1e1e;white-space:nowrap;-webkit-text-stroke:.28px #1e1e1e}</style>

<div class="abs" style="left:917px;top:760.9px;width:54px;height:29px;background:#f4f4f4;border:1.3px solid #aeaeae;border-radius:3px;font-size:10px;line-height:27px;color:#444;padding-left:8px;-webkit-text-stroke:.2px #444">193%<svg style="position:absolute;left:34px;top:9px" width="12" height="8" viewBox="0 0 12 8"><path d="M1 6.5L6 1.5L11 6.5" fill="none" stroke="#555" stroke-width="1"/></svg></div>

<div id="popup" class="abs">
<div class="abs" style="left:6.7px;top:6.2px;width:93.5px;height:21.5px;border:2.6px solid #7eaaea;border-radius:3px;background:#fff"></div>
<div class="abs" style="left:11.1px;top:11.0px;width:1px;height:13px;background:#333"></div>
<div class="abs" style="left:11.8px;top:12.0px;font-size:10.05px;color:#a0a0a0;white-space:nowrap">Cerca per Nome</div>
<div class="abs" style="left:9.0px;top:34.3px;width:443.5px;height:354.9px;background:#fff;border:1px solid #b9b9b9;overflow:hidden">
<svg class="abs" style="left:-1px;top:-1px" width="443.5" height="354.9" viewBox="657.5 360.3 443.5 354.9"><g fill="none" stroke="#111" stroke-width="1.15">
<path d="M681.3 372.2H691.3M696.9 372.2H711.4M717 372.2H724.1M692.6 374.2L695.8 370.4M776.7 360.5 L814.4 375.4 L789.3 375.4 L807.1 360.5M880.2 360.7 L903.5 365.7 L879.1 374.4 L895.0 360.7M973.7 360.7 L989.7 365.7 L950.9 375.1 L982.9 360.7M1046.7 360.7 L1040.3 364.6 L1058.8 375.1 L1077.5 364.6 L1070.7 360.7M681.2 445.7 L689.6 445.7 L684.3 428.9 L696.9 445.7 L702.6 419.6 L708.0 445.7 L720.6 428.9 L715.8 445.7 L724.2 445.7M771.0 445.7 L778.4 441.5 L774.0 428.9 L785.1 436.4 L792.8 419.6 L799.8 436.4 L810.9 428.9 L806.7 441.5 L814.4 445.7M860.8 423.9 L865.4 423.9 L865.4 407.5 L870.0 423.9 L875.7 407.5 L882.5 445.1 L888.9 407.5 L893.9 423.9 L899.6 407.5 L899.6 423.9 L903.7 423.9M950.5 423.9 L955.0 407.5 L959.4 423.5 L964.2 415.4 L972.6 445.1 L978.3 415.4 L984.5 423.9 L989.7 407.5 L993.8 423.9M1040.3 429.8 L1044.0 421.1 L1047.2 436.7 L1053.6 413.2 L1057.7 445.1 L1062.0 404.7 L1066.1 445.1 L1070.7 413.2 L1076.8 436.7 L1079.8 421.1 L1083.9 429.8M681.2 495.0 L687.5 487.0 L683.7 503.2 L694.4 478.0 L690.0 510.8 L699.7 478.0 L702.6 516.0 L705.7 478.0 L715.8 510.8 L711.2 478.0 L721.5 503.2 L717.5 487.0 L724.2 495.0M771.0 503.4 L813.8 490.6 L771.0 516.4 L814.4 503.4M860.8 503.8H903.7M860.8 516.8L903.7 490.8M874.5 516.8L890.9 490.8M874.5 516.8L882.3 503.8L890.9 490.8M950.5 503.8H965.8M978.3 503.8H993.8M963.5 490.8 L968.5 498.0 L972.1 492.4 L976.0 498.0 L981.0 490.8 L978.3 503.8 L981.0 516.3 L976.0 509.5 L972.1 515.3 L968.5 509.5 L963.5 516.3 L965.8 503.8ZM1039.9 495.1H1076.4M1047.2 473.4Q1038.6 495.2 1047.2 517M1068.4 473.4Q1078.4 495.2 1068.4 517M681.2 587.1 L688.1 566.4 L694.4 587.1 L711.0 587.1 L717.5 566.4 L724.2 587.1M771.0 566.2 L783.6 566.2 L792.8 587.1 L801.2 566.2 L814.4 566.2M860.8 570.4H868.8M897.8 570.4H903.7M868.8 553.5 L890.9 570.4 L868.8 587.5ZM890.9 553.5H897.8V587.5H890.9ZM950.5 570.4H971M985.1 570.4H993.8M950.9 553.5 L971.0 570.4 L950.9 587.5 L964.6 570.4ZM972.6 553.5 L977.2 553.5 L985.1 570.4 L977.2 587.5 L972.6 587.5 L975.6 570.4ZM1040.3 553.5 L1049.5 587.5 L1049.7 553.5 L1058.1 587.5 L1058.4 553.5 L1066.8 587.5 L1067.0 553.5 L1074.8 587.5 L1075.2 553.5 L1083.9 553.5M681.2 624.3 L687.1 657.9 L692.1 624.3 L696.9 639.6 L702.6 624.3 L708.0 639.6 L713.1 624.3 L719.6 657.9 L724.2 624.3M792.8 625.6 L798.7 642.8 L792.8 659.1 L787.2 642.8ZM787.2 642.8 L770.0 634.4 L781.9 642.8 L770.0 650.8ZM798.7 642.8 L815.5 634.4 L804.0 642.8 L815.5 650.8ZM860.8 636.9 L865.4 615.9 L873.8 636.9 L865.4 657.9ZM860.8 636.9H873.8M890.9 636.9H903.7M873.8 636.9 L882.0 628.3 L890.9 636.9 L882.0 645.4ZM890.9 636.9 L899.6 615.9 L903.7 636.9 L899.6 657.9ZM950.2 636.9 L961.2 615.9 L961.2 657.9ZM961.2 636.9 L968.5 615.9 L975.6 636.9 L968.5 657.9ZM975.6 615.9 L986.7 636.9 L975.6 657.9ZM1040.3 636.9 L1058.6 615.3 L1076.8 636.9 L1058.6 658.6ZM1046.7 636.9 L1058.6 615.3 L1070.7 636.9 L1058.6 658.6ZM1051.3 636.9 L1058.6 626.0 L1066.1 636.9 L1058.6 647.2ZM681.2 707.8 L687.5 695.7 L694.4 707.8 L687.5 720.0ZM711.0 707.8 L717.5 695.7 L724.2 707.8 L717.5 720.0ZM694.4 707.8 L702.6 686.8 L711.0 707.8 L702.6 724.0ZM690.0 720.0 L702.6 695.2 L715.0 720.0M792.8 691.0 L779.8 711.0 L783.0 718.0M792.8 691.0 L805.6 711.0 L802.5 718.0M771 712.5L775.5 717M814.4 712.5L810 717M872.9 715.0 L882.5 691.2 L892.3 715.0M876.8 715.0 L882.5 691.2 L888.0 715.0M879.5 716.0 L882.5 710.0 L885.5 716.0M955 690.5L959.6 716M990.8 690.5L984.3 716M968.0 716.0 L972.1 704.2 L976.5 716.0M1040.3 703.5 L1053.1 699.0 L1042.2 716.0M1083.9 703.5 L1070.7 699.0 L1082.1 716.0M1044.5 713.8 L1052.5 711.0 L1052.0 716.0M1079.5 713.8 L1071.5 711.0 L1072.0 716.0M1059.0 716.0 L1062.0 711.7 L1065.0 716.0"/>
<g fill="#fff"><circle cx="694.1" cy="372.2" r="2.5"/><circle cx="714.2" cy="372.2" r="2.5"/></g>
</g></svg>
<div class="pl" style="left:22.5px;top:22.8px">26a</div>
<div class="pl" style="left:112.5px;top:22.8px">27</div>
<div class="pl" style="left:202.5px;top:22.8px">28</div>
<div class="pl" style="left:291.8px;top:22.8px">29</div>
<div class="pl" style="left:381.9px;top:22.8px">30</div>
<div class="pl" style="left:22.5px;top:93.6px">31</div>
<div class="pl" style="left:112.5px;top:93.6px">32</div>
<div class="pl" style="left:202.5px;top:93.6px">33</div>
<div class="pl" style="left:291.8px;top:93.6px">34</div>
<div class="pl" style="left:381.9px;top:93.6px">35</div>
<div class="pl" style="left:22.5px;top:164.6px">36</div>
<div class="pl" style="left:112.5px;top:164.6px">37</div>
<div class="pl" style="left:202.5px;top:164.6px">38</div>
<div class="pl" style="left:291.8px;top:164.6px">39</div>
<div class="pl" style="left:381.9px;top:164.6px">40</div>
<div class="pl" style="left:22.5px;top:235.6px">41</div>
<div class="pl" style="left:112.5px;top:235.6px">42</div>
<div class="pl" style="left:202.5px;top:235.6px">43</div>
<div class="pl" style="left:291.8px;top:235.6px">44</div>
<div class="pl" style="left:381.9px;top:235.6px">45</div>
<div class="pl" style="left:22.5px;top:306.6px">46</div>
<div class="pl" style="left:112.5px;top:306.6px">47</div>
<div class="pl" style="left:202.5px;top:306.6px">48</div>
<div class="pl" style="left:291.8px;top:306.6px">49</div>
<div class="pl" style="left:381.9px;top:306.6px">50</div>
</div></div>
<style>.pl{position:absolute;width:40px;text-align:center;font-size:10.2px;line-height:11px;color:#111;-webkit-text-stroke:.25px #111}</style>
<div id="notif" class="abs">
<div class="abs" style="left:9.5px;top:13px;width:23px;height:23px;border-radius:50%;background:#fff"></div>
<svg class="abs" style="left:9.5px;top:13px" width="23" height="23" viewBox="0 0 23 23"><path d="M7.6 6H15.4A2 2 0 0 1 17.4 8V12.8A2 2 0 0 1 15.4 14.8H13.2L10.3 17.3V14.8H7.6A2 2 0 0 1 5.6 12.8V8A2 2 0 0 1 7.6 6Z" fill="none" stroke="#ff3118" stroke-width="1.7" stroke-linejoin="round"/></svg>
<div class="abs" style="left:42px;top:11.5px;font-size:10.1px;color:#2b2b2b;white-space:nowrap;-webkit-text-stroke:.3px #2b2b2b;letter-spacing:.1px">Anna Biasi says...</div>
<div class="abs" style="left:42px;top:27px;font-size:9.2px;color:#585858;white-space:nowrap;letter-spacing:.12px">Ero alla ricerca di una planimetria</div>
</div>

</body></html>
